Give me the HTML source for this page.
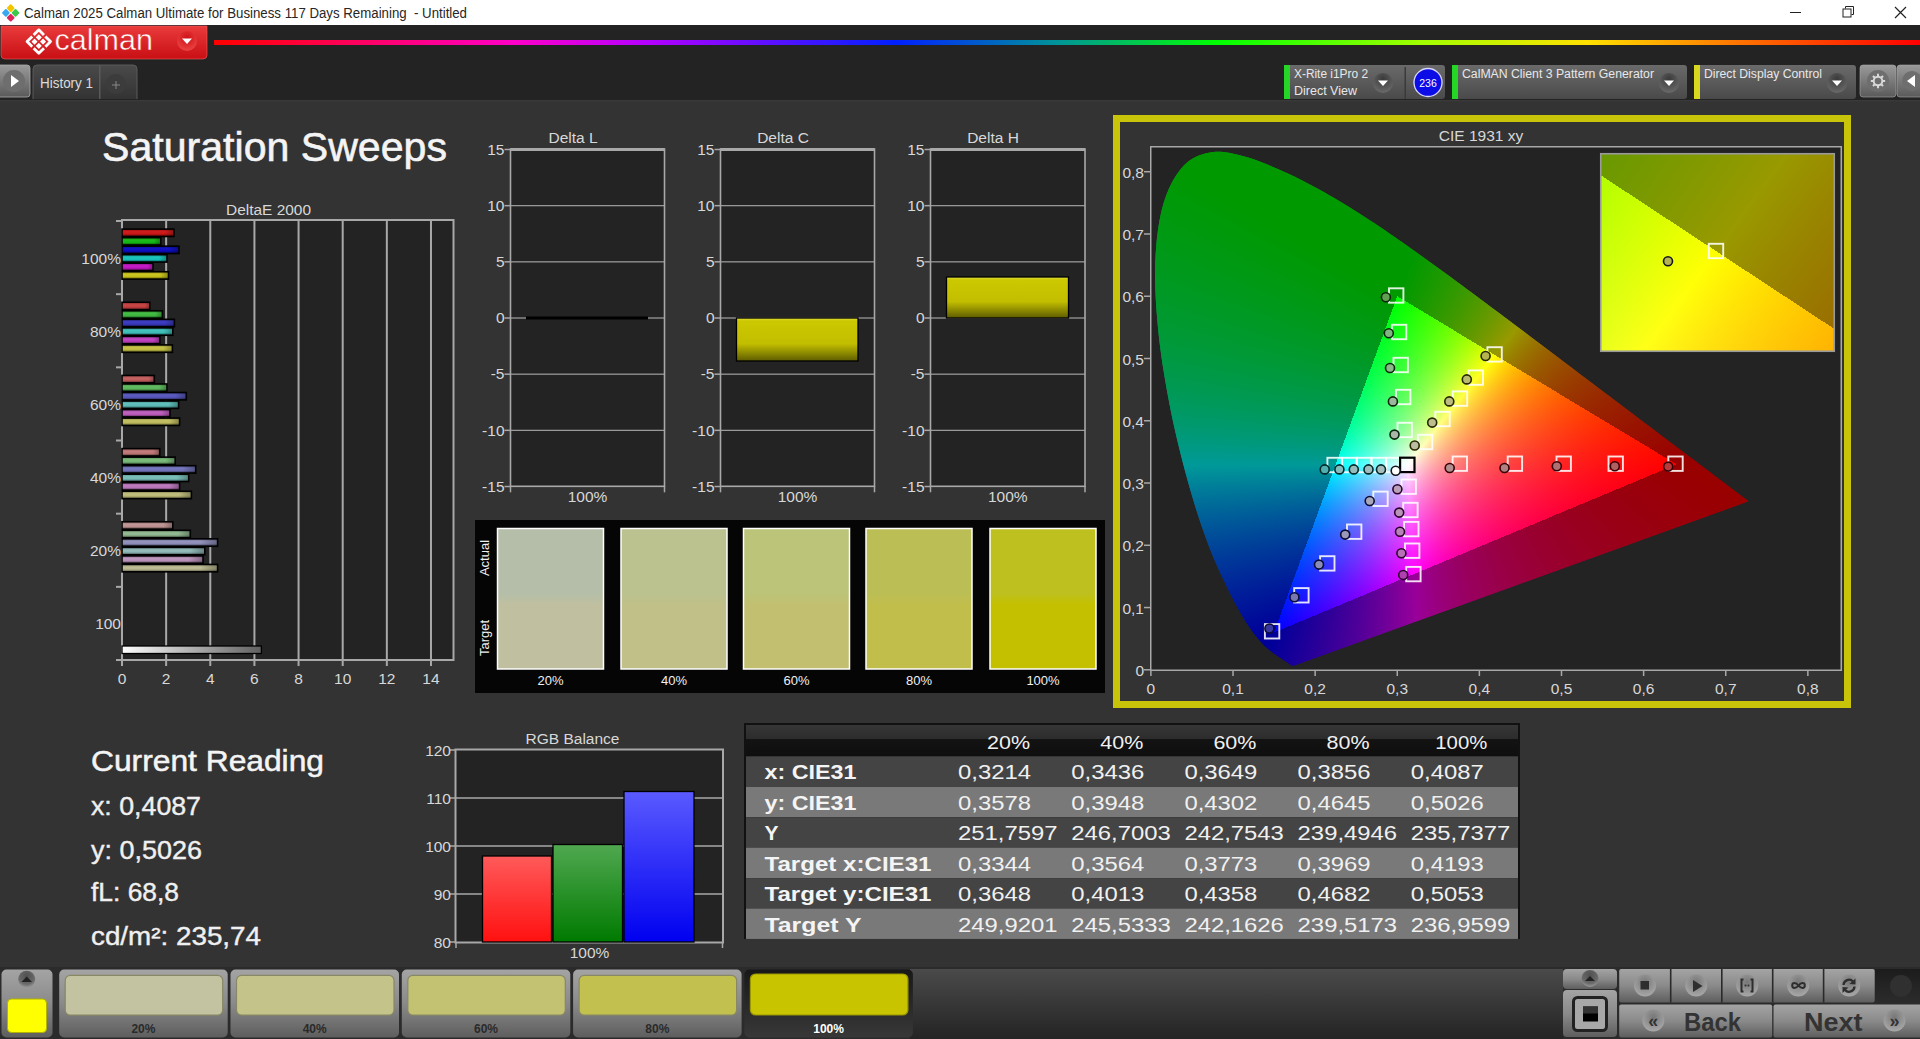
<!DOCTYPE html>
<html><head><meta charset="utf-8"><style>
html,body{margin:0;padding:0;background:#333;overflow:hidden}
#wrap{position:relative;width:1920px;height:1039px;overflow:hidden}
svg{position:absolute;left:0;top:0;font-family:"Liberation Sans", sans-serif}
canvas{position:absolute}
</style></head><body><div id="wrap">
<svg width="1920" height="1039" viewBox="0 0 1920 1039">
<rect x="0" y="0" width="1920" height="1039" fill="#333333"/>
<rect x="0" y="0" width="1920" height="25" fill="#ffffff"/>
<rect x="0" y="25" width="1920" height="75" fill="#232323"/>
<rect x="0" y="100" width="1920" height="1.5" fill="#393939"/>
<g transform="translate(10.7,12.9) rotate(45)"><rect x="-6.4" y="-6.4" width="6" height="6" rx="1" fill="#f5c400"/><rect x="0.4" y="-6.4" width="6" height="6" rx="1" fill="#3cc84b"/><rect x="-6.4" y="0.4" width="6" height="6" rx="1" fill="#3aa8f0"/><rect x="0.4" y="0.4" width="6" height="6" rx="1" fill="#e0245a"/></g>
<text x="24" y="18" font-size="14" fill="#262626" text-anchor="start" font-weight="normal" textLength="443" lengthAdjust="spacingAndGlyphs" >Calman 2025 Calman Ultimate for Business 117 Days Remaining&#160; - Untitled</text>
<rect x="1790" y="12" width="11" height="1" fill="#222"/>
<rect x="1843" y="9" width="8" height="8" fill="none" stroke="#222" stroke-width="1"/>
<path d="M1845.5 8.5 V6.5 H1853.5 V14.5 H1851.5" fill="none" stroke="#222" stroke-width="1"/>
<path d="M1895 7 L1906 18 M1906 7 L1895 18" stroke="#222" stroke-width="1.2"/>
<defs><linearGradient id="gRed" x1="0" y1="0" x2="0" y2="1"><stop offset="0" stop-color="#ea3b3b"/><stop offset="1" stop-color="#c80f14"/></linearGradient><radialGradient id="gRedC" cx="0.5" cy="0.35" r="0.6"><stop offset="0" stop-color="#d01015"/><stop offset="1" stop-color="#e84040"/></radialGradient><linearGradient id="gRain" x1="0" y1="0" x2="1" y2="0"><stop offset="0" stop-color="#ff0000"/><stop offset="0.175" stop-color="#ff00c8"/><stop offset="0.254" stop-color="#b400ff"/><stop offset="0.40" stop-color="#0020ff"/><stop offset="0.496" stop-color="#009696"/><stop offset="0.588" stop-color="#00ff00"/><stop offset="0.706" stop-color="#a0ff00"/><stop offset="0.805" stop-color="#ffe000"/><stop offset="0.89" stop-color="#ff7800"/><stop offset="1" stop-color="#ff0000"/></linearGradient></defs>
<path d="M1 26 H207 V55 Q207 59 203 59 H5 Q1 59 1 55 Z" fill="url(#gRed)" stroke="#f06060" stroke-width="0.6"/>
<g transform="translate(38.8,41.6) rotate(45)"><path d="M-1 -8.3 H-8.3 V-1 M1 -8.3 H8.3 V-1 M8.3 1 V8.3 H1 M-1 8.3 H-8.3 V1" fill="none" stroke="#fff" stroke-width="2.8" stroke-linejoin="round"/><rect x="-5.2" y="-5.2" width="4.4" height="4.4" rx="0.6" fill="#fff"/><rect x="0.8" y="-5.2" width="4.4" height="4.4" rx="0.6" fill="#fff"/><rect x="-5.2" y="0.8" width="4.4" height="4.4" rx="0.6" fill="#fff"/><rect x="0.8" y="0.8" width="4.4" height="4.4" rx="0.6" fill="#fff"/></g>
<text x="54.5" y="50" font-size="30" fill="#ffffff" text-anchor="start" font-weight="normal" textLength="98.5" lengthAdjust="spacingAndGlyphs" stroke="#d82222" stroke-width="0.45">calman</text>
<circle cx="187" cy="41" r="10" fill="url(#gRedC)"/>
<path d="M182 38.5 H192 L187 44 Z" fill="#fff"/>
<rect x="214" y="40" width="1706" height="5" fill="url(#gRain)"/>
<defs><linearGradient id="gBtn" x1="0" y1="0" x2="0" y2="1"><stop offset="0" stop-color="#9a9a9a"/><stop offset="1" stop-color="#5a5a5a"/></linearGradient><linearGradient id="gTab" x1="0" y1="0" x2="0" y2="1"><stop offset="0" stop-color="#4a4a4a"/><stop offset="1" stop-color="#333"/></linearGradient><linearGradient id="gDev" x1="0" y1="0" x2="0" y2="1"><stop offset="0" stop-color="#6a6a6a"/><stop offset="1" stop-color="#4a4a4a"/></linearGradient><radialGradient id="gCirc" cx="0.5" cy="0.3" r="0.7"><stop offset="0" stop-color="#3a3a3a"/><stop offset="1" stop-color="#6a6a6a"/></radialGradient></defs>
<rect x="-3" y="65" width="33" height="32" rx="3" fill="url(#gBtn)" stroke="#aaa" stroke-width="0.8"/>
<circle cx="14" cy="81" r="11" fill="#6e6e6e"/>
<path d="M11 75 L19 81 L11 87 Z" fill="#fff"/>
<path d="M33 99 V69 Q33 65 37 65 H133 Q137 65 137 69 V99" fill="url(#gTab)" stroke="#5a5a5a" stroke-width="1"/>
<rect x="99" y="65" width="1.5" height="34" fill="#5a5a5a"/>
<text x="40" y="88" font-size="14" fill="#dcdcdc" text-anchor="start" font-weight="normal" textLength="53" lengthAdjust="spacingAndGlyphs" >History 1</text>
<circle cx="116" cy="84" r="10" fill="#3c3c3c"/>
<path d="M112 85 H120 M116 81 V89" stroke="#888" stroke-width="1"/>
<rect x="1284" y="65" width="161" height="34" rx="3" fill="url(#gDev)"/>
<rect x="1284" y="65" width="6" height="34" fill="#26d626"/>
<text x="1294" y="78" font-size="12.5" fill="#e8e8e8" text-anchor="start" font-weight="normal" textLength="74" lengthAdjust="spacingAndGlyphs" >X-Rite i1Pro 2</text>
<text x="1294" y="95" font-size="12.5" fill="#e8e8e8" text-anchor="start" font-weight="normal" textLength="63" lengthAdjust="spacingAndGlyphs" >Direct View</text>
<circle cx="1383" cy="83" r="10" fill="url(#gCirc)"/>
<path d="M1378 80.5 H1388 L1383 86 Z" fill="#fff"/>
<rect x="1404.5" y="67" width="1.5" height="32" fill="#3a3a3a"/>
<circle cx="1428" cy="82.5" r="14" fill="#0c0ce6" stroke="#d8d8ff" stroke-width="1.3"/>
<text x="1428" y="86.5" font-size="11.5" fill="#fff" text-anchor="middle" font-weight="normal" textLength="17.5" lengthAdjust="spacingAndGlyphs" >236</text>
<rect x="1452" y="65" width="235" height="34" rx="3" fill="url(#gDev)"/>
<rect x="1452" y="65" width="6" height="34" fill="#26d626"/>
<text x="1462" y="78" font-size="12.5" fill="#e8e8e8" text-anchor="start" font-weight="normal" textLength="192" lengthAdjust="spacingAndGlyphs" >CalMAN Client 3 Pattern Generator</text>
<circle cx="1669" cy="83" r="10" fill="url(#gCirc)"/>
<path d="M1664 80.5 H1674 L1669 86 Z" fill="#fff"/>
<rect x="1694" y="65" width="162" height="34" rx="3" fill="url(#gDev)"/>
<rect x="1694" y="65" width="6" height="34" fill="#d8d820"/>
<text x="1704" y="78" font-size="12.5" fill="#e8e8e8" text-anchor="start" font-weight="normal" textLength="118" lengthAdjust="spacingAndGlyphs" >Direct Display Control</text>
<circle cx="1837" cy="83" r="10" fill="url(#gCirc)"/>
<path d="M1832 80.5 H1842 L1837 86 Z" fill="#fff"/>
<rect x="1860" y="65" width="36" height="32" rx="3" fill="url(#gBtn)" stroke="#aaa" stroke-width="0.6"/>
<circle cx="1878" cy="81" r="11" fill="#6e6e6e"/>
<g transform="translate(1878,81)"><path d="M4.49 -1.00 L7.13 -1.00 L7.13 1.00 L4.49 1.00 L3.88 2.46 L5.75 4.33 L4.33 5.75 L2.46 3.88 L1.00 4.49 L1.00 7.13 L-1.00 7.13 L-1.00 4.49 L-2.46 3.88 L-4.33 5.75 L-5.75 4.33 L-3.88 2.46 L-4.49 1.00 L-7.13 1.00 L-7.13 -1.00 L-4.49 -1.00 L-3.88 -2.46 L-5.75 -4.33 L-4.33 -5.75 L-2.46 -3.88 L-1.00 -4.49 L-1.00 -7.13 L1.00 -7.13 L1.00 -4.49 L2.46 -3.88 L4.33 -5.75 L5.75 -4.33 L3.88 -2.46 Z" fill="#d8d8d8"/><circle r="5.3" fill="#d8d8d8"/><circle r="3.3" fill="#6e6e6e"/></g>
<rect x="1897" y="65" width="26" height="32" rx="3" fill="url(#gBtn)" stroke="#aaa" stroke-width="0.6"/>
<circle cx="1912" cy="81" r="10" fill="#6e6e6e"/>
<path d="M1915 75 L1907 81 L1915 87 Z" fill="#fff"/>
<text x="102" y="161" font-size="40" fill="#f4f4f4" text-anchor="start" font-weight="normal" textLength="345" lengthAdjust="spacingAndGlyphs" stroke="#f4f4f4" stroke-width="0.6">Saturation Sweeps</text>
<rect x="122" y="221" width="331.5" height="439" fill="#232323"/>
<rect x="165.14" y="221" width="2" height="439" fill="#a8a8a8"/>
<rect x="209.28" y="221" width="2" height="439" fill="#a8a8a8"/>
<rect x="253.42" y="221" width="2" height="439" fill="#a8a8a8"/>
<rect x="297.56" y="221" width="2" height="439" fill="#a8a8a8"/>
<rect x="341.70" y="221" width="2" height="439" fill="#a8a8a8"/>
<rect x="385.84" y="221" width="2" height="439" fill="#a8a8a8"/>
<rect x="429.98" y="221" width="2" height="439" fill="#a8a8a8"/>
<rect x="122" y="220" width="331.5" height="440" fill="none" stroke="#a8a8a8" stroke-width="2"/>
<text x="268.5" y="215" font-size="15.5" fill="#d8d8d8" text-anchor="middle" font-weight="normal" textLength="85" lengthAdjust="spacingAndGlyphs" >DeltaE 2000</text>
<rect x="116" y="220.0" width="6" height="2" fill="#a8a8a8"/>
<rect x="116" y="293.17" width="6" height="2" fill="#a8a8a8"/>
<rect x="116" y="366.34000000000003" width="6" height="2" fill="#a8a8a8"/>
<rect x="116" y="439.51" width="6" height="2" fill="#a8a8a8"/>
<rect x="116" y="512.6800000000001" width="6" height="2" fill="#a8a8a8"/>
<rect x="116" y="585.85" width="6" height="2" fill="#a8a8a8"/>
<rect x="116" y="659.02" width="6" height="2" fill="#a8a8a8"/>
<rect x="121.00" y="660" width="2" height="6" fill="#a8a8a8"/>
<text x="122.0" y="684" font-size="15.5" fill="#d8d8d8" text-anchor="middle" font-weight="normal" >0</text>
<rect x="165.14" y="660" width="2" height="6" fill="#a8a8a8"/>
<text x="166.14" y="684" font-size="15.5" fill="#d8d8d8" text-anchor="middle" font-weight="normal" >2</text>
<rect x="209.28" y="660" width="2" height="6" fill="#a8a8a8"/>
<text x="210.28" y="684" font-size="15.5" fill="#d8d8d8" text-anchor="middle" font-weight="normal" >4</text>
<rect x="253.42" y="660" width="2" height="6" fill="#a8a8a8"/>
<text x="254.42000000000002" y="684" font-size="15.5" fill="#d8d8d8" text-anchor="middle" font-weight="normal" >6</text>
<rect x="297.56" y="660" width="2" height="6" fill="#a8a8a8"/>
<text x="298.56" y="684" font-size="15.5" fill="#d8d8d8" text-anchor="middle" font-weight="normal" >8</text>
<rect x="341.70" y="660" width="2" height="6" fill="#a8a8a8"/>
<text x="342.7" y="684" font-size="15.5" fill="#d8d8d8" text-anchor="middle" font-weight="normal" >10</text>
<rect x="385.84" y="660" width="2" height="6" fill="#a8a8a8"/>
<text x="386.84000000000003" y="684" font-size="15.5" fill="#d8d8d8" text-anchor="middle" font-weight="normal" >12</text>
<rect x="429.98" y="660" width="2" height="6" fill="#a8a8a8"/>
<text x="430.98" y="684" font-size="15.5" fill="#d8d8d8" text-anchor="middle" font-weight="normal" >14</text>
<text x="121" y="263.6" font-size="15.5" fill="#d8d8d8" text-anchor="end" font-weight="normal" >100%</text>
<text x="121" y="336.77000000000004" font-size="15.5" fill="#d8d8d8" text-anchor="end" font-weight="normal" >80%</text>
<text x="121" y="409.94000000000005" font-size="15.5" fill="#d8d8d8" text-anchor="end" font-weight="normal" >60%</text>
<text x="121" y="483.11" font-size="15.5" fill="#d8d8d8" text-anchor="end" font-weight="normal" >40%</text>
<text x="121" y="556.2800000000001" font-size="15.5" fill="#d8d8d8" text-anchor="end" font-weight="normal" >20%</text>
<text x="121" y="629.45" font-size="15.5" fill="#d8d8d8" text-anchor="end" font-weight="normal" >100</text>
<rect x="122" y="229.10" width="52.0" height="7.4" fill="url(#gb0)" stroke="#000" stroke-width="1.6"/>
<rect x="122" y="229.10" width="52.0" height="7.4" fill="url(#gShade)"/>
<rect x="122" y="237.63" width="38.8" height="7.4" fill="url(#gb1)" stroke="#000" stroke-width="1.6"/>
<rect x="122" y="237.63" width="38.8" height="7.4" fill="url(#gShade)"/>
<rect x="122" y="246.16" width="57.0" height="7.4" fill="url(#gb2)" stroke="#000" stroke-width="1.6"/>
<rect x="122" y="246.16" width="57.0" height="7.4" fill="url(#gShade)"/>
<rect x="122" y="254.69" width="45.0" height="7.4" fill="url(#gb3)" stroke="#000" stroke-width="1.6"/>
<rect x="122" y="254.69" width="45.0" height="7.4" fill="url(#gShade)"/>
<rect x="122" y="263.22" width="31.0" height="7.4" fill="url(#gb4)" stroke="#000" stroke-width="1.6"/>
<rect x="122" y="263.22" width="31.0" height="7.4" fill="url(#gShade)"/>
<rect x="122" y="271.75" width="46.5" height="7.4" fill="url(#gb5)" stroke="#000" stroke-width="1.6"/>
<rect x="122" y="271.75" width="46.5" height="7.4" fill="url(#gShade)"/>
<rect x="122" y="302.27" width="27.8" height="7.4" fill="url(#gb6)" stroke="#000" stroke-width="1.6"/>
<rect x="122" y="302.27" width="27.8" height="7.4" fill="url(#gShade)"/>
<rect x="122" y="310.80" width="40.4" height="7.4" fill="url(#gb7)" stroke="#000" stroke-width="1.6"/>
<rect x="122" y="310.80" width="40.4" height="7.4" fill="url(#gShade)"/>
<rect x="122" y="319.33" width="52.4" height="7.4" fill="url(#gb8)" stroke="#000" stroke-width="1.6"/>
<rect x="122" y="319.33" width="52.4" height="7.4" fill="url(#gShade)"/>
<rect x="122" y="327.86" width="50.8" height="7.4" fill="url(#gb9)" stroke="#000" stroke-width="1.6"/>
<rect x="122" y="327.86" width="50.8" height="7.4" fill="url(#gShade)"/>
<rect x="122" y="336.39" width="37.8" height="7.4" fill="url(#gb10)" stroke="#000" stroke-width="1.6"/>
<rect x="122" y="336.39" width="37.8" height="7.4" fill="url(#gShade)"/>
<rect x="122" y="344.92" width="50.4" height="7.4" fill="url(#gb11)" stroke="#000" stroke-width="1.6"/>
<rect x="122" y="344.92" width="50.4" height="7.4" fill="url(#gShade)"/>
<rect x="122" y="375.44" width="32.3" height="7.4" fill="url(#gb12)" stroke="#000" stroke-width="1.6"/>
<rect x="122" y="375.44" width="32.3" height="7.4" fill="url(#gShade)"/>
<rect x="122" y="383.97" width="45.0" height="7.4" fill="url(#gb13)" stroke="#000" stroke-width="1.6"/>
<rect x="122" y="383.97" width="45.0" height="7.4" fill="url(#gShade)"/>
<rect x="122" y="392.50" width="64.3" height="7.4" fill="url(#gb14)" stroke="#000" stroke-width="1.6"/>
<rect x="122" y="392.50" width="64.3" height="7.4" fill="url(#gShade)"/>
<rect x="122" y="401.03" width="56.6" height="7.4" fill="url(#gb15)" stroke="#000" stroke-width="1.6"/>
<rect x="122" y="401.03" width="56.6" height="7.4" fill="url(#gShade)"/>
<rect x="122" y="409.56" width="48.0" height="7.4" fill="url(#gb16)" stroke="#000" stroke-width="1.6"/>
<rect x="122" y="409.56" width="48.0" height="7.4" fill="url(#gShade)"/>
<rect x="122" y="418.09" width="57.6" height="7.4" fill="url(#gb17)" stroke="#000" stroke-width="1.6"/>
<rect x="122" y="418.09" width="57.6" height="7.4" fill="url(#gShade)"/>
<rect x="122" y="448.61" width="37.7" height="7.4" fill="url(#gb18)" stroke="#000" stroke-width="1.6"/>
<rect x="122" y="448.61" width="37.7" height="7.4" fill="url(#gShade)"/>
<rect x="122" y="457.14" width="53.2" height="7.4" fill="url(#gb19)" stroke="#000" stroke-width="1.6"/>
<rect x="122" y="457.14" width="53.2" height="7.4" fill="url(#gShade)"/>
<rect x="122" y="465.67" width="73.7" height="7.4" fill="url(#gb20)" stroke="#000" stroke-width="1.6"/>
<rect x="122" y="465.67" width="73.7" height="7.4" fill="url(#gShade)"/>
<rect x="122" y="474.20" width="66.7" height="7.4" fill="url(#gb21)" stroke="#000" stroke-width="1.6"/>
<rect x="122" y="474.20" width="66.7" height="7.4" fill="url(#gShade)"/>
<rect x="122" y="482.73" width="57.6" height="7.4" fill="url(#gb22)" stroke="#000" stroke-width="1.6"/>
<rect x="122" y="482.73" width="57.6" height="7.4" fill="url(#gShade)"/>
<rect x="122" y="491.26" width="69.4" height="7.4" fill="url(#gb23)" stroke="#000" stroke-width="1.6"/>
<rect x="122" y="491.26" width="69.4" height="7.4" fill="url(#gShade)"/>
<rect x="122" y="521.78" width="50.8" height="7.4" fill="url(#gb24)" stroke="#000" stroke-width="1.6"/>
<rect x="122" y="521.78" width="50.8" height="7.4" fill="url(#gShade)"/>
<rect x="122" y="530.31" width="68.3" height="7.4" fill="url(#gb25)" stroke="#000" stroke-width="1.6"/>
<rect x="122" y="530.31" width="68.3" height="7.4" fill="url(#gShade)"/>
<rect x="122" y="538.84" width="95.6" height="7.4" fill="url(#gb26)" stroke="#000" stroke-width="1.6"/>
<rect x="122" y="538.84" width="95.6" height="7.4" fill="url(#gShade)"/>
<rect x="122" y="547.37" width="82.8" height="7.4" fill="url(#gb27)" stroke="#000" stroke-width="1.6"/>
<rect x="122" y="547.37" width="82.8" height="7.4" fill="url(#gShade)"/>
<rect x="122" y="555.90" width="81.0" height="7.4" fill="url(#gb28)" stroke="#000" stroke-width="1.6"/>
<rect x="122" y="555.90" width="81.0" height="7.4" fill="url(#gShade)"/>
<rect x="122" y="564.43" width="95.6" height="7.4" fill="url(#gb29)" stroke="#000" stroke-width="1.6"/>
<rect x="122" y="564.43" width="95.6" height="7.4" fill="url(#gShade)"/>
<rect x="122" y="646" width="139.39999999999998" height="7.5" fill="url(#gGray)" stroke="#000" stroke-width="1.3"/>
<defs><linearGradient id="gb0" x1="0" y1="0" x2="0" y2="1"><stop offset="0" stop-color="rgb(160, 17, 17)"/><stop offset="0.35" stop-color="rgb(208, 30, 30)"/><stop offset="0.65" stop-color="rgb(200, 22, 22)"/><stop offset="1" stop-color="rgb(90, 9, 9)"/></linearGradient><linearGradient id="gb1" x1="0" y1="0" x2="0" y2="1"><stop offset="0" stop-color="rgb(16, 144, 16)"/><stop offset="0.35" stop-color="rgb(28, 188, 28)"/><stop offset="0.65" stop-color="rgb(20, 180, 20)"/><stop offset="1" stop-color="rgb(9, 81, 9)"/></linearGradient><linearGradient id="gb2" x1="0" y1="0" x2="0" y2="1"><stop offset="0" stop-color="rgb(9, 9, 152)"/><stop offset="0.35" stop-color="rgb(20, 20, 198)"/><stop offset="0.65" stop-color="rgb(12, 12, 190)"/><stop offset="1" stop-color="rgb(5, 5, 85)"/></linearGradient><linearGradient id="gb3" x1="0" y1="0" x2="0" y2="1"><stop offset="0" stop-color="rgb(16, 152, 145)"/><stop offset="0.35" stop-color="rgb(28, 198, 190)"/><stop offset="0.65" stop-color="rgb(20, 190, 182)"/><stop offset="1" stop-color="rgb(9, 85, 81)"/></linearGradient><linearGradient id="gb4" x1="0" y1="0" x2="0" y2="1"><stop offset="0" stop-color="rgb(152, 17, 152)"/><stop offset="0.35" stop-color="rgb(198, 30, 198)"/><stop offset="0.65" stop-color="rgb(190, 22, 190)"/><stop offset="1" stop-color="rgb(85, 9, 85)"/></linearGradient><linearGradient id="gb5" x1="0" y1="0" x2="0" y2="1"><stop offset="0" stop-color="rgb(156, 152, 20)"/><stop offset="0.35" stop-color="rgb(203, 198, 33)"/><stop offset="0.65" stop-color="rgb(195, 190, 25)"/><stop offset="1" stop-color="rgb(87, 85, 11)"/></linearGradient><linearGradient id="gb6" x1="0" y1="0" x2="0" y2="1"><stop offset="0" stop-color="rgb(155, 50, 50)"/><stop offset="0.35" stop-color="rgb(202, 71, 71)"/><stop offset="0.65" stop-color="rgb(194, 63, 63)"/><stop offset="1" stop-color="rgb(87, 28, 28)"/></linearGradient><linearGradient id="gb7" x1="0" y1="0" x2="0" y2="1"><stop offset="0" stop-color="rgb(48, 144, 48)"/><stop offset="0.35" stop-color="rgb(69, 188, 69)"/><stop offset="0.65" stop-color="rgb(61, 180, 61)"/><stop offset="1" stop-color="rgb(27, 81, 27)"/></linearGradient><linearGradient id="gb8" x1="0" y1="0" x2="0" y2="1"><stop offset="0" stop-color="rgb(44, 44, 149)"/><stop offset="0.35" stop-color="rgb(63, 63, 195)"/><stop offset="0.65" stop-color="rgb(55, 55, 187)"/><stop offset="1" stop-color="rgb(24, 24, 84)"/></linearGradient><linearGradient id="gb9" x1="0" y1="0" x2="0" y2="1"><stop offset="0" stop-color="rgb(48, 149, 144)"/><stop offset="0.35" stop-color="rgb(69, 195, 189)"/><stop offset="0.65" stop-color="rgb(61, 187, 181)"/><stop offset="1" stop-color="rgb(27, 84, 81)"/></linearGradient><linearGradient id="gb10" x1="0" y1="0" x2="0" y2="1"><stop offset="0" stop-color="rgb(149, 50, 149)"/><stop offset="0.35" stop-color="rgb(195, 71, 195)"/><stop offset="0.65" stop-color="rgb(187, 63, 187)"/><stop offset="1" stop-color="rgb(84, 28, 84)"/></linearGradient><linearGradient id="gb11" x1="0" y1="0" x2="0" y2="1"><stop offset="0" stop-color="rgb(152, 149, 52)"/><stop offset="0.35" stop-color="rgb(199, 195, 73)"/><stop offset="0.65" stop-color="rgb(191, 187, 65)"/><stop offset="1" stop-color="rgb(85, 84, 29)"/></linearGradient><linearGradient id="gb12" x1="0" y1="0" x2="0" y2="1"><stop offset="0" stop-color="rgb(152, 72, 72)"/><stop offset="0.35" stop-color="rgb(199, 99, 99)"/><stop offset="0.65" stop-color="rgb(191, 91, 91)"/><stop offset="1" stop-color="rgb(85, 40, 40)"/></linearGradient><linearGradient id="gb13" x1="0" y1="0" x2="0" y2="1"><stop offset="0" stop-color="rgb(72, 144, 72)"/><stop offset="0.35" stop-color="rgb(98, 188, 98)"/><stop offset="0.65" stop-color="rgb(90, 180, 90)"/><stop offset="1" stop-color="rgb(40, 81, 40)"/></linearGradient><linearGradient id="gb14" x1="0" y1="0" x2="0" y2="1"><stop offset="0" stop-color="rgb(68, 68, 148)"/><stop offset="0.35" stop-color="rgb(93, 93, 193)"/><stop offset="0.65" stop-color="rgb(85, 85, 185)"/><stop offset="1" stop-color="rgb(38, 38, 83)"/></linearGradient><linearGradient id="gb15" x1="0" y1="0" x2="0" y2="1"><stop offset="0" stop-color="rgb(72, 148, 144)"/><stop offset="0.35" stop-color="rgb(98, 193, 189)"/><stop offset="0.65" stop-color="rgb(90, 185, 181)"/><stop offset="1" stop-color="rgb(40, 83, 81)"/></linearGradient><linearGradient id="gb16" x1="0" y1="0" x2="0" y2="1"><stop offset="0" stop-color="rgb(148, 72, 148)"/><stop offset="0.35" stop-color="rgb(193, 99, 193)"/><stop offset="0.65" stop-color="rgb(185, 91, 185)"/><stop offset="1" stop-color="rgb(83, 40, 83)"/></linearGradient><linearGradient id="gb17" x1="0" y1="0" x2="0" y2="1"><stop offset="0" stop-color="rgb(150, 148, 74)"/><stop offset="0.35" stop-color="rgb(196, 193, 101)"/><stop offset="0.65" stop-color="rgb(188, 185, 93)"/><stop offset="1" stop-color="rgb(84, 83, 41)"/></linearGradient><linearGradient id="gb18" x1="0" y1="0" x2="0" y2="1"><stop offset="0" stop-color="rgb(150, 92, 92)"/><stop offset="0.35" stop-color="rgb(196, 124, 124)"/><stop offset="0.65" stop-color="rgb(188, 116, 116)"/><stop offset="1" stop-color="rgb(84, 52, 52)"/></linearGradient><linearGradient id="gb19" x1="0" y1="0" x2="0" y2="1"><stop offset="0" stop-color="rgb(92, 144, 92)"/><stop offset="0.35" stop-color="rgb(124, 188, 124)"/><stop offset="0.65" stop-color="rgb(116, 180, 116)"/><stop offset="1" stop-color="rgb(52, 81, 52)"/></linearGradient><linearGradient id="gb20" x1="0" y1="0" x2="0" y2="1"><stop offset="0" stop-color="rgb(89, 89, 147)"/><stop offset="0.35" stop-color="rgb(120, 120, 192)"/><stop offset="0.65" stop-color="rgb(112, 112, 184)"/><stop offset="1" stop-color="rgb(50, 50, 82)"/></linearGradient><linearGradient id="gb21" x1="0" y1="0" x2="0" y2="1"><stop offset="0" stop-color="rgb(92, 147, 144)"/><stop offset="0.35" stop-color="rgb(124, 192, 188)"/><stop offset="0.65" stop-color="rgb(116, 184, 180)"/><stop offset="1" stop-color="rgb(52, 82, 81)"/></linearGradient><linearGradient id="gb22" x1="0" y1="0" x2="0" y2="1"><stop offset="0" stop-color="rgb(147, 92, 147)"/><stop offset="0.35" stop-color="rgb(192, 124, 192)"/><stop offset="0.65" stop-color="rgb(184, 116, 184)"/><stop offset="1" stop-color="rgb(82, 52, 82)"/></linearGradient><linearGradient id="gb23" x1="0" y1="0" x2="0" y2="1"><stop offset="0" stop-color="rgb(148, 147, 94)"/><stop offset="0.35" stop-color="rgb(194, 192, 126)"/><stop offset="0.65" stop-color="rgb(186, 184, 118)"/><stop offset="1" stop-color="rgb(83, 82, 53)"/></linearGradient><linearGradient id="gb24" x1="0" y1="0" x2="0" y2="1"><stop offset="0" stop-color="rgb(147, 113, 113)"/><stop offset="0.35" stop-color="rgb(192, 150, 150)"/><stop offset="0.65" stop-color="rgb(184, 142, 142)"/><stop offset="1" stop-color="rgb(82, 63, 63)"/></linearGradient><linearGradient id="gb25" x1="0" y1="0" x2="0" y2="1"><stop offset="0" stop-color="rgb(112, 144, 112)"/><stop offset="0.35" stop-color="rgb(149, 188, 149)"/><stop offset="0.65" stop-color="rgb(141, 180, 141)"/><stop offset="1" stop-color="rgb(63, 81, 63)"/></linearGradient><linearGradient id="gb26" x1="0" y1="0" x2="0" y2="1"><stop offset="0" stop-color="rgb(111, 111, 145)"/><stop offset="0.35" stop-color="rgb(147, 147, 190)"/><stop offset="0.65" stop-color="rgb(139, 139, 182)"/><stop offset="1" stop-color="rgb(62, 62, 81)"/></linearGradient><linearGradient id="gb27" x1="0" y1="0" x2="0" y2="1"><stop offset="0" stop-color="rgb(112, 145, 144)"/><stop offset="0.35" stop-color="rgb(149, 190, 188)"/><stop offset="0.65" stop-color="rgb(141, 182, 180)"/><stop offset="1" stop-color="rgb(63, 81, 81)"/></linearGradient><linearGradient id="gb28" x1="0" y1="0" x2="0" y2="1"><stop offset="0" stop-color="rgb(145, 113, 145)"/><stop offset="0.35" stop-color="rgb(190, 150, 190)"/><stop offset="0.65" stop-color="rgb(182, 142, 182)"/><stop offset="1" stop-color="rgb(81, 63, 81)"/></linearGradient><linearGradient id="gb29" x1="0" y1="0" x2="0" y2="1"><stop offset="0" stop-color="rgb(146, 145, 113)"/><stop offset="0.35" stop-color="rgb(191, 190, 150)"/><stop offset="0.65" stop-color="rgb(183, 182, 142)"/><stop offset="1" stop-color="rgb(82, 81, 63)"/></linearGradient><linearGradient id="gShade" x1="0" y1="0" x2="1" y2="0"><stop offset="0.82" stop-color="#000" stop-opacity="0"/><stop offset="1" stop-color="#000" stop-opacity="0.3"/></linearGradient><linearGradient id="gGray" x1="0" y1="0" x2="1" y2="0"><stop offset="0" stop-color="#ffffff"/><stop offset="1" stop-color="#606060"/></linearGradient></defs>
<defs><linearGradient id="gYel" x1="0" y1="0" x2="0" y2="1"><stop offset="0" stop-color="#e4e040"/><stop offset="0.07" stop-color="#ccc800"/><stop offset="0.6" stop-color="#c2be00"/><stop offset="1" stop-color="#5e5c00"/></linearGradient></defs>
<rect x="510.5" y="149.5" width="154.0" height="336.8" fill="#232323"/>
<rect x="510.5" y="205.07" width="154.0" height="1.2" fill="#a0a0a0"/>
<rect x="510.5" y="261.24" width="154.0" height="1.2" fill="#a0a0a0"/>
<rect x="510.5" y="317.41" width="154.0" height="1.2" fill="#a0a0a0"/>
<rect x="510.5" y="373.58" width="154.0" height="1.2" fill="#a0a0a0"/>
<rect x="510.5" y="429.75" width="154.0" height="1.2" fill="#a0a0a0"/>
<rect x="510.5" y="149.0" width="154.0" height="337.3" fill="none" stroke="#a8a8a8" stroke-width="1.6"/>
<rect x="510.5" y="148.0" width="154.0" height="3" fill="#a8a8a8"/>
<rect x="504.5" y="148.75" width="6" height="1.5" fill="#a8a8a8"/>
<text x="504.5" y="154.7" font-size="15.5" fill="#d8d8d8" text-anchor="end" font-weight="normal" >15</text>
<rect x="504.5" y="204.92" width="6" height="1.5" fill="#a8a8a8"/>
<text x="504.5" y="210.87" font-size="15.5" fill="#d8d8d8" text-anchor="end" font-weight="normal" >10</text>
<rect x="504.5" y="261.09" width="6" height="1.5" fill="#a8a8a8"/>
<text x="504.5" y="267.04" font-size="15.5" fill="#d8d8d8" text-anchor="end" font-weight="normal" >5</text>
<rect x="504.5" y="317.26" width="6" height="1.5" fill="#a8a8a8"/>
<text x="504.5" y="323.21" font-size="15.5" fill="#d8d8d8" text-anchor="end" font-weight="normal" >0</text>
<rect x="504.5" y="373.43" width="6" height="1.5" fill="#a8a8a8"/>
<text x="504.5" y="379.38" font-size="15.5" fill="#d8d8d8" text-anchor="end" font-weight="normal" >-5</text>
<rect x="504.5" y="429.60" width="6" height="1.5" fill="#a8a8a8"/>
<text x="504.5" y="435.55" font-size="15.5" fill="#d8d8d8" text-anchor="end" font-weight="normal" >-10</text>
<rect x="504.5" y="485.77" width="6" height="1.5" fill="#a8a8a8"/>
<text x="504.5" y="491.71999999999997" font-size="15.5" fill="#d8d8d8" text-anchor="end" font-weight="normal" >-15</text>
<rect x="509.75" y="486.3" width="1.5" height="6" fill="#a8a8a8"/>
<rect x="663.75" y="486.3" width="1.5" height="6" fill="#a8a8a8"/>
<text x="573" y="143" font-size="15.5" fill="#d8d8d8" text-anchor="middle" font-weight="normal" >Delta L</text>
<text x="587.5" y="502" font-size="15.5" fill="#d8d8d8" text-anchor="middle" font-weight="normal" >100%</text>
<rect x="720.5" y="149.5" width="154.0" height="336.8" fill="#232323"/>
<rect x="720.5" y="205.07" width="154.0" height="1.2" fill="#a0a0a0"/>
<rect x="720.5" y="261.24" width="154.0" height="1.2" fill="#a0a0a0"/>
<rect x="720.5" y="317.41" width="154.0" height="1.2" fill="#a0a0a0"/>
<rect x="720.5" y="373.58" width="154.0" height="1.2" fill="#a0a0a0"/>
<rect x="720.5" y="429.75" width="154.0" height="1.2" fill="#a0a0a0"/>
<rect x="720.5" y="149.0" width="154.0" height="337.3" fill="none" stroke="#a8a8a8" stroke-width="1.6"/>
<rect x="720.5" y="148.0" width="154.0" height="3" fill="#a8a8a8"/>
<rect x="714.5" y="148.75" width="6" height="1.5" fill="#a8a8a8"/>
<text x="714.5" y="154.7" font-size="15.5" fill="#d8d8d8" text-anchor="end" font-weight="normal" >15</text>
<rect x="714.5" y="204.92" width="6" height="1.5" fill="#a8a8a8"/>
<text x="714.5" y="210.87" font-size="15.5" fill="#d8d8d8" text-anchor="end" font-weight="normal" >10</text>
<rect x="714.5" y="261.09" width="6" height="1.5" fill="#a8a8a8"/>
<text x="714.5" y="267.04" font-size="15.5" fill="#d8d8d8" text-anchor="end" font-weight="normal" >5</text>
<rect x="714.5" y="317.26" width="6" height="1.5" fill="#a8a8a8"/>
<text x="714.5" y="323.21" font-size="15.5" fill="#d8d8d8" text-anchor="end" font-weight="normal" >0</text>
<rect x="714.5" y="373.43" width="6" height="1.5" fill="#a8a8a8"/>
<text x="714.5" y="379.38" font-size="15.5" fill="#d8d8d8" text-anchor="end" font-weight="normal" >-5</text>
<rect x="714.5" y="429.60" width="6" height="1.5" fill="#a8a8a8"/>
<text x="714.5" y="435.55" font-size="15.5" fill="#d8d8d8" text-anchor="end" font-weight="normal" >-10</text>
<rect x="714.5" y="485.77" width="6" height="1.5" fill="#a8a8a8"/>
<text x="714.5" y="491.71999999999997" font-size="15.5" fill="#d8d8d8" text-anchor="end" font-weight="normal" >-15</text>
<rect x="719.75" y="486.3" width="1.5" height="6" fill="#a8a8a8"/>
<rect x="873.75" y="486.3" width="1.5" height="6" fill="#a8a8a8"/>
<text x="783" y="143" font-size="15.5" fill="#d8d8d8" text-anchor="middle" font-weight="normal" >Delta C</text>
<text x="797.5" y="502" font-size="15.5" fill="#d8d8d8" text-anchor="middle" font-weight="normal" >100%</text>
<rect x="930.5" y="149.5" width="154.5" height="336.8" fill="#232323"/>
<rect x="930.5" y="205.07" width="154.5" height="1.2" fill="#a0a0a0"/>
<rect x="930.5" y="261.24" width="154.5" height="1.2" fill="#a0a0a0"/>
<rect x="930.5" y="317.41" width="154.5" height="1.2" fill="#a0a0a0"/>
<rect x="930.5" y="373.58" width="154.5" height="1.2" fill="#a0a0a0"/>
<rect x="930.5" y="429.75" width="154.5" height="1.2" fill="#a0a0a0"/>
<rect x="930.5" y="149.0" width="154.5" height="337.3" fill="none" stroke="#a8a8a8" stroke-width="1.6"/>
<rect x="930.5" y="148.0" width="154.5" height="3" fill="#a8a8a8"/>
<rect x="924.5" y="148.75" width="6" height="1.5" fill="#a8a8a8"/>
<text x="924.5" y="154.7" font-size="15.5" fill="#d8d8d8" text-anchor="end" font-weight="normal" >15</text>
<rect x="924.5" y="204.92" width="6" height="1.5" fill="#a8a8a8"/>
<text x="924.5" y="210.87" font-size="15.5" fill="#d8d8d8" text-anchor="end" font-weight="normal" >10</text>
<rect x="924.5" y="261.09" width="6" height="1.5" fill="#a8a8a8"/>
<text x="924.5" y="267.04" font-size="15.5" fill="#d8d8d8" text-anchor="end" font-weight="normal" >5</text>
<rect x="924.5" y="317.26" width="6" height="1.5" fill="#a8a8a8"/>
<text x="924.5" y="323.21" font-size="15.5" fill="#d8d8d8" text-anchor="end" font-weight="normal" >0</text>
<rect x="924.5" y="373.43" width="6" height="1.5" fill="#a8a8a8"/>
<text x="924.5" y="379.38" font-size="15.5" fill="#d8d8d8" text-anchor="end" font-weight="normal" >-5</text>
<rect x="924.5" y="429.60" width="6" height="1.5" fill="#a8a8a8"/>
<text x="924.5" y="435.55" font-size="15.5" fill="#d8d8d8" text-anchor="end" font-weight="normal" >-10</text>
<rect x="924.5" y="485.77" width="6" height="1.5" fill="#a8a8a8"/>
<text x="924.5" y="491.71999999999997" font-size="15.5" fill="#d8d8d8" text-anchor="end" font-weight="normal" >-15</text>
<rect x="929.75" y="486.3" width="1.5" height="6" fill="#a8a8a8"/>
<rect x="1084.25" y="486.3" width="1.5" height="6" fill="#a8a8a8"/>
<text x="993" y="143" font-size="15.5" fill="#d8d8d8" text-anchor="middle" font-weight="normal" >Delta H</text>
<text x="1007.75" y="502" font-size="15.5" fill="#d8d8d8" text-anchor="middle" font-weight="normal" >100%</text>
<rect x="526" y="316.5" width="122" height="3" fill="#000"/>
<rect x="736.5" y="318" width="121.5" height="43" fill="url(#gYel)" stroke="#000" stroke-width="1.3"/>
<defs><linearGradient id="gYel2" x1="0" y1="0" x2="0" y2="1"><stop offset="0" stop-color="#e4e040"/><stop offset="0.07" stop-color="#ccc800"/><stop offset="0.6" stop-color="#c2be00"/><stop offset="1" stop-color="#5e5c00"/></linearGradient></defs>
<rect x="946.5" y="277" width="122" height="41" fill="url(#gYel2)" stroke="#000" stroke-width="1.3"/>
<rect x="475" y="520" width="630" height="173" fill="#050505"/>
<defs><linearGradient id="gsw0" x1="0" y1="0" x2="0" y2="1"><stop offset="0.46" stop-color="#b4bea8"/><stop offset="0.54" stop-color="#c0c0a0"/></linearGradient></defs>
<rect x="497.5" y="528.5" width="106" height="140.5" fill="url(#gsw0)"/>
<rect x="497.5" y="528.5" width="106" height="140.5" fill="none" stroke="#fff" stroke-width="1.5"/>
<text x="550.5" y="685" font-size="13" fill="#f0f0f0" text-anchor="middle" font-weight="normal" >20%</text>
<defs><linearGradient id="gsw1" x1="0" y1="0" x2="0" y2="1"><stop offset="0.46" stop-color="#bbc290"/><stop offset="0.54" stop-color="#c0c088"/></linearGradient></defs>
<rect x="621" y="528.5" width="106" height="140.5" fill="url(#gsw1)"/>
<rect x="621" y="528.5" width="106" height="140.5" fill="none" stroke="#fff" stroke-width="1.5"/>
<text x="674" y="685" font-size="13" fill="#f0f0f0" text-anchor="middle" font-weight="normal" >40%</text>
<defs><linearGradient id="gsw2" x1="0" y1="0" x2="0" y2="1"><stop offset="0.46" stop-color="#bbc478"/><stop offset="0.54" stop-color="#c2c070"/></linearGradient></defs>
<rect x="743.5" y="528.5" width="106" height="140.5" fill="url(#gsw2)"/>
<rect x="743.5" y="528.5" width="106" height="140.5" fill="none" stroke="#fff" stroke-width="1.5"/>
<text x="796.5" y="685" font-size="13" fill="#f0f0f0" text-anchor="middle" font-weight="normal" >60%</text>
<defs><linearGradient id="gsw3" x1="0" y1="0" x2="0" y2="1"><stop offset="0.46" stop-color="#bbbe55"/><stop offset="0.54" stop-color="#c2be4c"/></linearGradient></defs>
<rect x="866" y="528.5" width="106" height="140.5" fill="url(#gsw3)"/>
<rect x="866" y="528.5" width="106" height="140.5" fill="none" stroke="#fff" stroke-width="1.5"/>
<text x="919" y="685" font-size="13" fill="#f0f0f0" text-anchor="middle" font-weight="normal" >80%</text>
<defs><linearGradient id="gsw4" x1="0" y1="0" x2="0" y2="1"><stop offset="0.46" stop-color="#bec020"/><stop offset="0.54" stop-color="#c4c000"/></linearGradient></defs>
<rect x="990" y="528.5" width="106" height="140.5" fill="url(#gsw4)"/>
<rect x="990" y="528.5" width="106" height="140.5" fill="none" stroke="#fff" stroke-width="1.5"/>
<text x="1043" y="685" font-size="13" fill="#f0f0f0" text-anchor="middle" font-weight="normal" >100%</text>
<text transform="translate(489,558) rotate(-90)" font-size="13" fill="#f0f0f0" text-anchor="middle">Actual</text>
<text transform="translate(489,638) rotate(-90)" font-size="13" fill="#f0f0f0" text-anchor="middle">Target</text>
<rect x="1116.5" y="118.5" width="731" height="586" fill="none" stroke="#c8c40a" stroke-width="7"/>
<rect x="1151" y="147" width="690" height="523" fill="#232323"/>
<rect x="1150.75" y="146.75" width="690.5" height="523.5" fill="none" stroke="#a8a8a8" stroke-width="1.5"/>
<text x="1481" y="141" font-size="15.5" fill="#d8d8d8" text-anchor="middle" font-weight="normal" >CIE 1931 xy</text>
<rect x="1144" y="669.05" width="6" height="1.5" fill="#a8a8a8"/>
<text x="1144" y="675.8" font-size="15.5" fill="#d8d8d8" text-anchor="end" font-weight="normal" >0</text>
<rect x="1144" y="606.79" width="6" height="1.5" fill="#a8a8a8"/>
<text x="1144" y="613.54" font-size="15.5" fill="#d8d8d8" text-anchor="end" font-weight="normal" >0,1</text>
<rect x="1144" y="544.53" width="6" height="1.5" fill="#a8a8a8"/>
<text x="1144" y="551.28" font-size="15.5" fill="#d8d8d8" text-anchor="end" font-weight="normal" >0,2</text>
<rect x="1144" y="482.27" width="6" height="1.5" fill="#a8a8a8"/>
<text x="1144" y="489.02" font-size="15.5" fill="#d8d8d8" text-anchor="end" font-weight="normal" >0,3</text>
<rect x="1144" y="420.01" width="6" height="1.5" fill="#a8a8a8"/>
<text x="1144" y="426.75999999999993" font-size="15.5" fill="#d8d8d8" text-anchor="end" font-weight="normal" >0,4</text>
<rect x="1144" y="357.75" width="6" height="1.5" fill="#a8a8a8"/>
<text x="1144" y="364.49999999999994" font-size="15.5" fill="#d8d8d8" text-anchor="end" font-weight="normal" >0,5</text>
<rect x="1144" y="295.49" width="6" height="1.5" fill="#a8a8a8"/>
<text x="1144" y="302.23999999999995" font-size="15.5" fill="#d8d8d8" text-anchor="end" font-weight="normal" >0,6</text>
<rect x="1144" y="233.23" width="6" height="1.5" fill="#a8a8a8"/>
<text x="1144" y="239.97999999999996" font-size="15.5" fill="#d8d8d8" text-anchor="end" font-weight="normal" >0,7</text>
<rect x="1144" y="170.97" width="6" height="1.5" fill="#a8a8a8"/>
<text x="1144" y="177.7199999999999" font-size="15.5" fill="#d8d8d8" text-anchor="end" font-weight="normal" >0,8</text>
<rect x="1150.15" y="670" width="1.5" height="6" fill="#a8a8a8"/>
<text x="1150.9" y="694" font-size="15.5" fill="#d8d8d8" text-anchor="middle" font-weight="normal" >0</text>
<rect x="1232.27" y="670" width="1.5" height="6" fill="#a8a8a8"/>
<text x="1233.02" y="694" font-size="15.5" fill="#d8d8d8" text-anchor="middle" font-weight="normal" >0,1</text>
<rect x="1314.39" y="670" width="1.5" height="6" fill="#a8a8a8"/>
<text x="1315.14" y="694" font-size="15.5" fill="#d8d8d8" text-anchor="middle" font-weight="normal" >0,2</text>
<rect x="1396.51" y="670" width="1.5" height="6" fill="#a8a8a8"/>
<text x="1397.2600000000002" y="694" font-size="15.5" fill="#d8d8d8" text-anchor="middle" font-weight="normal" >0,3</text>
<rect x="1478.63" y="670" width="1.5" height="6" fill="#a8a8a8"/>
<text x="1479.38" y="694" font-size="15.5" fill="#d8d8d8" text-anchor="middle" font-weight="normal" >0,4</text>
<rect x="1560.75" y="670" width="1.5" height="6" fill="#a8a8a8"/>
<text x="1561.5" y="694" font-size="15.5" fill="#d8d8d8" text-anchor="middle" font-weight="normal" >0,5</text>
<rect x="1642.87" y="670" width="1.5" height="6" fill="#a8a8a8"/>
<text x="1643.6200000000001" y="694" font-size="15.5" fill="#d8d8d8" text-anchor="middle" font-weight="normal" >0,6</text>
<rect x="1724.99" y="670" width="1.5" height="6" fill="#a8a8a8"/>
<text x="1725.7400000000002" y="694" font-size="15.5" fill="#d8d8d8" text-anchor="middle" font-weight="normal" >0,7</text>
<rect x="1807.11" y="670" width="1.5" height="6" fill="#a8a8a8"/>
<text x="1807.8600000000001" y="694" font-size="15.5" fill="#d8d8d8" text-anchor="middle" font-weight="normal" >0,8</text>
<text x="91" y="770.5" font-size="29" fill="#f4f4f4" text-anchor="start" font-weight="normal" textLength="233" lengthAdjust="spacingAndGlyphs" stroke="#f4f4f4" stroke-width="0.5">Current Reading</text>
<text x="91" y="815" font-size="25.5" fill="#f0f0f0" text-anchor="start" font-weight="normal" textLength="110" lengthAdjust="spacingAndGlyphs" stroke="#f0f0f0" stroke-width="0.4">x: 0,4087</text>
<text x="91" y="859" font-size="25.5" fill="#f0f0f0" text-anchor="start" font-weight="normal" textLength="111" lengthAdjust="spacingAndGlyphs" stroke="#f0f0f0" stroke-width="0.4">y: 0,5026</text>
<text x="91" y="901" font-size="25.5" fill="#f0f0f0" text-anchor="start" font-weight="normal" textLength="88" lengthAdjust="spacingAndGlyphs" stroke="#f0f0f0" stroke-width="0.4">fL: 68,8</text>
<text x="91" y="945" font-size="25.5" fill="#f0f0f0" text-anchor="start" font-weight="normal" textLength="170" lengthAdjust="spacingAndGlyphs" stroke="#f0f0f0" stroke-width="0.4">cd/m²: 235,74</text>
<rect x="456" y="750" width="266.5" height="192" fill="#232323"/>
<rect x="456" y="797.25" width="266.5" height="1.5" fill="#a8a8a8"/>
<rect x="456" y="845.25" width="266.5" height="1.5" fill="#a8a8a8"/>
<rect x="456" y="893.25" width="266.5" height="1.5" fill="#a8a8a8"/>
<rect x="455.5" y="749.5" width="267.5" height="193" fill="none" stroke="#a8a8a8" stroke-width="2"/>
<rect x="450" y="749.25" width="6" height="1.5" fill="#a8a8a8"/>
<text x="451" y="756" font-size="15.5" fill="#d8d8d8" text-anchor="end" font-weight="normal" >120</text>
<rect x="450" y="797.25" width="6" height="1.5" fill="#a8a8a8"/>
<text x="451" y="804" font-size="15.5" fill="#d8d8d8" text-anchor="end" font-weight="normal" >110</text>
<rect x="450" y="845.25" width="6" height="1.5" fill="#a8a8a8"/>
<text x="451" y="852" font-size="15.5" fill="#d8d8d8" text-anchor="end" font-weight="normal" >100</text>
<rect x="450" y="893.25" width="6" height="1.5" fill="#a8a8a8"/>
<text x="451" y="900" font-size="15.5" fill="#d8d8d8" text-anchor="end" font-weight="normal" >90</text>
<rect x="450" y="941.25" width="6" height="1.5" fill="#a8a8a8"/>
<text x="451" y="948" font-size="15.5" fill="#d8d8d8" text-anchor="end" font-weight="normal" >80</text>
<rect x="455.25" y="942" width="1.5" height="6" fill="#a8a8a8"/>
<rect x="721.75" y="942" width="1.5" height="6" fill="#a8a8a8"/>
<text x="572.5" y="744" font-size="15.5" fill="#d8d8d8" text-anchor="middle" font-weight="normal" >RGB Balance</text>
<text x="589.5" y="958" font-size="15.5" fill="#d8d8d8" text-anchor="middle" font-weight="normal" >100%</text>
<defs><linearGradient id="gR" x1="0" y1="0" x2="0" y2="1"><stop offset="0" stop-color="#ff5a5a"/><stop offset="1" stop-color="#ff1010"/></linearGradient><linearGradient id="gG" x1="0" y1="0" x2="0" y2="1"><stop offset="0" stop-color="#50a850"/><stop offset="1" stop-color="#007a00"/></linearGradient><linearGradient id="gB" x1="0" y1="0" x2="0" y2="1"><stop offset="0" stop-color="#5a5aff"/><stop offset="1" stop-color="#0000f0"/></linearGradient></defs>
<rect x="482.5" y="856" width="69" height="86" fill="url(#gR)" stroke="#000" stroke-width="1.3"/>
<rect x="553" y="844.5" width="69.5" height="97.5" fill="url(#gG)" stroke="#000" stroke-width="1.3"/>
<rect x="624" y="791.5" width="70" height="150.5" fill="url(#gB)" stroke="#000" stroke-width="1.3"/>
<rect x="744" y="723" width="776" height="216" fill="#111"/>
<defs><linearGradient id="gHdr" x1="0" y1="0" x2="0" y2="1"><stop offset="0" stop-color="#363636"/><stop offset="0.46" stop-color="#2c2c2c"/><stop offset="0.46" stop-color="#131313"/><stop offset="1" stop-color="#0e0e0e"/></linearGradient></defs>
<rect x="746" y="725" width="772" height="31" fill="url(#gHdr)"/>
<text x="1008.5" y="749" font-size="19" fill="#f0f0f0" text-anchor="middle" font-weight="normal" textLength="43" lengthAdjust="spacingAndGlyphs" >20%</text>
<text x="1121.8" y="749" font-size="19" fill="#f0f0f0" text-anchor="middle" font-weight="normal" textLength="43" lengthAdjust="spacingAndGlyphs" >40%</text>
<text x="1234.9" y="749" font-size="19" fill="#f0f0f0" text-anchor="middle" font-weight="normal" textLength="43" lengthAdjust="spacingAndGlyphs" >60%</text>
<text x="1348.1" y="749" font-size="19" fill="#f0f0f0" text-anchor="middle" font-weight="normal" textLength="43" lengthAdjust="spacingAndGlyphs" >80%</text>
<text x="1461.3" y="749" font-size="19" fill="#f0f0f0" text-anchor="middle" font-weight="normal" textLength="52" lengthAdjust="spacingAndGlyphs" >100%</text>
<rect x="746" y="756.3" width="772" height="30.45" fill="#444444"/>
<text x="764.5" y="779.3" font-size="20" fill="#f4f4f4" text-anchor="start" font-weight="bold" textLength="92" lengthAdjust="spacingAndGlyphs" >x: CIE31</text>
<text x="958" y="779.3" font-size="20" fill="#f0f0f0" text-anchor="start" font-weight="normal" textLength="73" lengthAdjust="spacingAndGlyphs" >0,3214</text>
<text x="1071.3" y="779.3" font-size="20" fill="#f0f0f0" text-anchor="start" font-weight="normal" textLength="73" lengthAdjust="spacingAndGlyphs" >0,3436</text>
<text x="1184.4" y="779.3" font-size="20" fill="#f0f0f0" text-anchor="start" font-weight="normal" textLength="73" lengthAdjust="spacingAndGlyphs" >0,3649</text>
<text x="1297.6" y="779.3" font-size="20" fill="#f0f0f0" text-anchor="start" font-weight="normal" textLength="73" lengthAdjust="spacingAndGlyphs" >0,3856</text>
<text x="1410.8" y="779.3" font-size="20" fill="#f0f0f0" text-anchor="start" font-weight="normal" textLength="73" lengthAdjust="spacingAndGlyphs" >0,4087</text>
<rect x="746" y="786.8" width="772" height="30.45" fill="#797979"/>
<text x="764.5" y="809.75" font-size="20" fill="#f4f4f4" text-anchor="start" font-weight="bold" textLength="92" lengthAdjust="spacingAndGlyphs" >y: CIE31</text>
<text x="958" y="809.75" font-size="20" fill="#f0f0f0" text-anchor="start" font-weight="normal" textLength="73" lengthAdjust="spacingAndGlyphs" >0,3578</text>
<text x="1071.3" y="809.75" font-size="20" fill="#f0f0f0" text-anchor="start" font-weight="normal" textLength="73" lengthAdjust="spacingAndGlyphs" >0,3948</text>
<text x="1184.4" y="809.75" font-size="20" fill="#f0f0f0" text-anchor="start" font-weight="normal" textLength="73" lengthAdjust="spacingAndGlyphs" >0,4302</text>
<text x="1297.6" y="809.75" font-size="20" fill="#f0f0f0" text-anchor="start" font-weight="normal" textLength="73" lengthAdjust="spacingAndGlyphs" >0,4645</text>
<text x="1410.8" y="809.75" font-size="20" fill="#f0f0f0" text-anchor="start" font-weight="normal" textLength="73" lengthAdjust="spacingAndGlyphs" >0,5026</text>
<rect x="746" y="817.2" width="772" height="30.45" fill="#444444"/>
<text x="764.5" y="840.1999999999999" font-size="20" fill="#f4f4f4" text-anchor="start" font-weight="bold" textLength="14" lengthAdjust="spacingAndGlyphs" >Y</text>
<text x="958" y="840.1999999999999" font-size="20" fill="#f0f0f0" text-anchor="start" font-weight="normal" textLength="99.5" lengthAdjust="spacingAndGlyphs" >251,7597</text>
<text x="1071.3" y="840.1999999999999" font-size="20" fill="#f0f0f0" text-anchor="start" font-weight="normal" textLength="99.5" lengthAdjust="spacingAndGlyphs" >246,7003</text>
<text x="1184.4" y="840.1999999999999" font-size="20" fill="#f0f0f0" text-anchor="start" font-weight="normal" textLength="99.5" lengthAdjust="spacingAndGlyphs" >242,7543</text>
<text x="1297.6" y="840.1999999999999" font-size="20" fill="#f0f0f0" text-anchor="start" font-weight="normal" textLength="99.5" lengthAdjust="spacingAndGlyphs" >239,4946</text>
<text x="1410.8" y="840.1999999999999" font-size="20" fill="#f0f0f0" text-anchor="start" font-weight="normal" textLength="99.5" lengthAdjust="spacingAndGlyphs" >235,7377</text>
<rect x="746" y="847.6" width="772" height="30.45" fill="#797979"/>
<text x="764.5" y="870.65" font-size="20" fill="#f4f4f4" text-anchor="start" font-weight="bold" textLength="167" lengthAdjust="spacingAndGlyphs" >Target x:CIE31</text>
<text x="958" y="870.65" font-size="20" fill="#f0f0f0" text-anchor="start" font-weight="normal" textLength="73" lengthAdjust="spacingAndGlyphs" >0,3344</text>
<text x="1071.3" y="870.65" font-size="20" fill="#f0f0f0" text-anchor="start" font-weight="normal" textLength="73" lengthAdjust="spacingAndGlyphs" >0,3564</text>
<text x="1184.4" y="870.65" font-size="20" fill="#f0f0f0" text-anchor="start" font-weight="normal" textLength="73" lengthAdjust="spacingAndGlyphs" >0,3773</text>
<text x="1297.6" y="870.65" font-size="20" fill="#f0f0f0" text-anchor="start" font-weight="normal" textLength="73" lengthAdjust="spacingAndGlyphs" >0,3969</text>
<text x="1410.8" y="870.65" font-size="20" fill="#f0f0f0" text-anchor="start" font-weight="normal" textLength="73" lengthAdjust="spacingAndGlyphs" >0,4193</text>
<rect x="746" y="878.1" width="772" height="30.45" fill="#444444"/>
<text x="764.5" y="901.0999999999999" font-size="20" fill="#f4f4f4" text-anchor="start" font-weight="bold" textLength="167" lengthAdjust="spacingAndGlyphs" >Target y:CIE31</text>
<text x="958" y="901.0999999999999" font-size="20" fill="#f0f0f0" text-anchor="start" font-weight="normal" textLength="73" lengthAdjust="spacingAndGlyphs" >0,3648</text>
<text x="1071.3" y="901.0999999999999" font-size="20" fill="#f0f0f0" text-anchor="start" font-weight="normal" textLength="73" lengthAdjust="spacingAndGlyphs" >0,4013</text>
<text x="1184.4" y="901.0999999999999" font-size="20" fill="#f0f0f0" text-anchor="start" font-weight="normal" textLength="73" lengthAdjust="spacingAndGlyphs" >0,4358</text>
<text x="1297.6" y="901.0999999999999" font-size="20" fill="#f0f0f0" text-anchor="start" font-weight="normal" textLength="73" lengthAdjust="spacingAndGlyphs" >0,4682</text>
<text x="1410.8" y="901.0999999999999" font-size="20" fill="#f0f0f0" text-anchor="start" font-weight="normal" textLength="73" lengthAdjust="spacingAndGlyphs" >0,5053</text>
<rect x="746" y="908.5" width="772" height="30.45" fill="#797979"/>
<text x="764.5" y="931.55" font-size="20" fill="#f4f4f4" text-anchor="start" font-weight="bold" textLength="97" lengthAdjust="spacingAndGlyphs" >Target Y</text>
<text x="958" y="931.55" font-size="20" fill="#f0f0f0" text-anchor="start" font-weight="normal" textLength="99.5" lengthAdjust="spacingAndGlyphs" >249,9201</text>
<text x="1071.3" y="931.55" font-size="20" fill="#f0f0f0" text-anchor="start" font-weight="normal" textLength="99.5" lengthAdjust="spacingAndGlyphs" >245,5333</text>
<text x="1184.4" y="931.55" font-size="20" fill="#f0f0f0" text-anchor="start" font-weight="normal" textLength="99.5" lengthAdjust="spacingAndGlyphs" >242,1626</text>
<text x="1297.6" y="931.55" font-size="20" fill="#f0f0f0" text-anchor="start" font-weight="normal" textLength="99.5" lengthAdjust="spacingAndGlyphs" >239,5173</text>
<text x="1410.8" y="931.55" font-size="20" fill="#f0f0f0" text-anchor="start" font-weight="normal" textLength="99.5" lengthAdjust="spacingAndGlyphs" >236,9599</text>
<rect x="0" y="967" width="1920" height="72" fill="#2b2b2b"/>
<defs><linearGradient id="gBB" x1="0" y1="0" x2="0" y2="1"><stop offset="0" stop-color="#a4a4a4"/><stop offset="0.5" stop-color="#8a8a8a"/><stop offset="1" stop-color="#5e5e5e"/></linearGradient><linearGradient id="gBBs" x1="0" y1="0" x2="0" y2="1"><stop offset="0" stop-color="#181818"/><stop offset="1" stop-color="#383838"/></linearGradient><linearGradient id="gPanel" x1="0" y1="0" x2="0" y2="1"><stop offset="0" stop-color="#4a4a4a"/><stop offset="1" stop-color="#242424"/></linearGradient><radialGradient id="gKnob" cx="0.5" cy="0.35" r="0.65"><stop offset="0" stop-color="#777"/><stop offset="1" stop-color="#a8a8a8"/></radialGradient><radialGradient id="gKnobD" cx="0.5" cy="0.3" r="0.7"><stop offset="0" stop-color="#505050"/><stop offset="0.7" stop-color="#6a6a6a"/><stop offset="1" stop-color="#9a9a9a"/></radialGradient></defs>
<rect x="910" y="969" width="653" height="70" fill="url(#gPanel)"/>
<rect x="1.5" y="969.5" width="51" height="68" rx="5" fill="url(#gBB)"/>
<circle cx="26.7" cy="979.3" r="8.5" fill="url(#gKnobD)"/>
<path d="M21.5 982 L26.7 976.5 L32 982 Z" fill="#222"/>
<rect x="7.5" y="999" width="39" height="33.5" rx="4" fill="#ffff00" stroke="#b0b000" stroke-width="1"/>
<rect x="59.2" y="969.5" width="168.5" height="68" rx="5" fill="url(#gBB)"/>
<rect x="65.2" y="975.4" width="157.5" height="39.7" rx="5" fill="#c3c3a2" stroke="#888866" stroke-width="1.2"/>
<text x="143.4" y="1033" font-size="12" fill="#2a2a2a" text-anchor="middle" font-weight="bold" >20%</text>
<rect x="230.5" y="969.5" width="168.5" height="68" rx="5" fill="url(#gBB)"/>
<rect x="236.5" y="975.4" width="157.5" height="39.7" rx="5" fill="#c4c48a" stroke="#888866" stroke-width="1.2"/>
<text x="314.7" y="1033" font-size="12" fill="#2a2a2a" text-anchor="middle" font-weight="bold" >40%</text>
<rect x="401.8" y="969.5" width="168.5" height="68" rx="5" fill="url(#gBB)"/>
<rect x="407.8" y="975.4" width="157.5" height="39.7" rx="5" fill="#c3c272" stroke="#888866" stroke-width="1.2"/>
<text x="486.0" y="1033" font-size="12" fill="#2a2a2a" text-anchor="middle" font-weight="bold" >60%</text>
<rect x="573.1" y="969.5" width="168.5" height="68" rx="5" fill="url(#gBB)"/>
<rect x="579.1" y="975.4" width="157.5" height="39.7" rx="5" fill="#c2c04e" stroke="#888866" stroke-width="1.2"/>
<text x="657.3000000000001" y="1033" font-size="12" fill="#2a2a2a" text-anchor="middle" font-weight="bold" >80%</text>
<rect x="744.4" y="969.5" width="168.5" height="68" rx="5" fill="url(#gBBs)"/>
<rect x="750.4" y="974" width="157.5" height="41" rx="5" fill="#c8c400" stroke="#9a9600" stroke-width="1.2"/>
<text x="828.6" y="1033" font-size="12" fill="#ffffff" text-anchor="middle" font-weight="bold" >100%</text>
<rect x="1563" y="969" width="54" height="20" rx="4" fill="url(#gBB)"/>
<circle cx="1590" cy="978.5" r="8.5" fill="url(#gKnobD)"/>
<path d="M1585 981 L1590 976 L1595 981 Z" fill="#222"/>
<rect x="1563" y="990" width="54" height="47" rx="4" fill="url(#gBB)"/>
<rect x="1573.5" y="997.5" width="33" height="33" rx="4" fill="#a8a8a8" stroke="#222" stroke-width="3"/>
<rect x="1583" y="1006.5" width="15" height="15" fill="#000"/>
<rect x="1583" y="1006.5" width="15" height="7" fill="#333"/>
<rect x="1619.2" y="969" width="255.5" height="33.5" rx="2" fill="url(#gBB)"/>
<circle cx="1645.0" cy="985.5" r="11" fill="url(#gKnob)"/>
<rect x="1669.9" y="969" width="1.6" height="33.5" fill="#2a2a2a"/>
<circle cx="1696.2" cy="985.5" r="11" fill="url(#gKnob)"/>
<rect x="1721.0" y="969" width="1.6" height="33.5" fill="#2a2a2a"/>
<circle cx="1747.2" cy="985.5" r="11" fill="url(#gKnob)"/>
<rect x="1771.9" y="969" width="1.6" height="33.5" fill="#2a2a2a"/>
<circle cx="1798.2" cy="985.5" r="11" fill="url(#gKnob)"/>
<rect x="1822.8" y="969" width="1.6" height="33.5" fill="#2a2a2a"/>
<circle cx="1849.2" cy="985.5" r="11" fill="url(#gKnob)"/>
<rect x="1640.5" y="981" width="8.5" height="8.5" fill="#2e2e2e"/>
<path d="M1693 980 L1702.5 986 L1693 992 Z" fill="#2e2e2e"/>
<path d="M1743.5 979.5 H1741.5 V991.5 H1743.5 M1750.5 979.5 H1752.5 V991.5 H1750.5" fill="none" stroke="#2e2e2e" stroke-width="2"/>
<rect x="1744.6" y="984.6" width="1.8" height="1.8" fill="#2e2e2e"/><rect x="1747.6" y="984.6" width="1.8" height="1.8" fill="#2e2e2e"/>
<path d="M1798.5 985.5 C1796 982.2 1792.2 982.2 1792.2 985.5 C1792.2 988.8 1796 988.8 1798.5 985.5 C1801 982.2 1804.8 982.2 1804.8 985.5 C1804.8 988.8 1801 988.8 1798.5 985.5 Z" fill="none" stroke="#2e2e2e" stroke-width="2"/>
<path d="M1843.5 985 A5.5 5.5 0 0 1 1853 981.5 M1854.5 986.5 A5.5 5.5 0 0 1 1845 990" fill="none" stroke="#2e2e2e" stroke-width="2.3"/>
<path d="M1855.5 978.5 L1855.5 984.5 L1849.5 984 Z M1842.5 993 L1842.5 987 L1848.5 987.5 Z" fill="#2e2e2e"/>
<defs><linearGradient id="gDk" x1="0" y1="0" x2="0" y2="1"><stop offset="0" stop-color="#1c1c1c"/><stop offset="1" stop-color="#2c2c2c"/></linearGradient></defs>
<rect x="1875" y="969" width="45" height="34" fill="url(#gDk)"/>
<circle cx="1901" cy="986" r="11" fill="#303030"/>
<rect x="1619.2" y="1004.5" width="153" height="33" rx="2" fill="url(#gBB)"/>
<rect x="1773.5" y="1004.5" width="150" height="33" rx="2" fill="url(#gBB)"/>
<circle cx="1653.3" cy="1020.4" r="11" fill="url(#gKnob)"/>
<circle cx="1894.5" cy="1020.4" r="11" fill="url(#gKnob)"/>
<text x="1653.3" y="1027" font-size="18" fill="#333" text-anchor="middle" font-weight="bold">«</text>
<text x="1894.5" y="1027" font-size="18" fill="#333" text-anchor="middle" font-weight="bold">»</text>
<text x="1684" y="1030.5" font-size="25" fill="#333" text-anchor="start" font-weight="bold" textLength="57" lengthAdjust="spacingAndGlyphs" >Back</text>
<text x="1804" y="1030.5" font-size="25" fill="#333" text-anchor="start" font-weight="bold" textLength="58.5" lengthAdjust="spacingAndGlyphs" >Next</text>
</svg>
<div style="position:absolute;left:1151px;top:147px;width:690px;height:523px;background:conic-gradient(from 0deg at 256.7px 318.0px, #019900 0deg, #0e9900 4deg, #1c9900 8deg, #299900 12deg, #379900 16deg, #469900 20deg, #559900 24deg, #669900 28deg, #779900 32deg, #8b9900 36deg, #999100 40deg, #997e00 44deg, #996d00 48deg, #995f00 52deg, #995200 56deg, #994500 60deg, #993b00 64deg, #993000 68deg, #992600 72deg, #991d00 76deg, #991400 80deg, #990b00 84deg, #990200 88deg, #990000 92deg, #990004 96deg, #99000c 100deg, #990013 104deg, #990019 108deg, #990020 112deg, #990026 116deg, #99002c 120deg, #990032 124deg, #990038 128deg, #99003d 132deg, #990043 136deg, #99004a 140deg, #990050 144deg, #990056 148deg, #99005d 152deg, #990065 156deg, #99006d 160deg, #990075 164deg, #99007f 168deg, #99008a 172deg, #990097 176deg, #8c0099 180deg, #7e0099 184deg, #710099 188deg, #630099 192deg, #540099 196deg, #460099 200deg, #360099 204deg, #270099 208deg, #170099 212deg, #070099 216deg, #000299 220deg, #000f99 224deg, #001b99 228deg, #002699 232deg, #003199 236deg, #003c99 240deg, #004799 244deg, #005299 248deg, #005e99 252deg, #006a99 256deg, #007699 260deg, #008399 264deg, #009199 268deg, #009991 272deg, #009983 276deg, #009976 280deg, #00996a 284deg, #00995f 288deg, #009955 292deg, #00994b 296deg, #009941 300deg, #009938 304deg, #00992f 308deg, #009927 312deg, #00991f 316deg, #009917 320deg, #009911 324deg, #00990c 328deg, #009908 332deg, #009906 336deg, #009904 340deg, #009901 344deg, #009900 348deg, #009900 352deg, #009900 356deg, #019900 360deg);clip-path:path('M143.3 518.5 L142.6 518.6 L141.7 518.6 L141.1 518.4 L140.5 518.1 L139.9 517.8 L139.3 517.4 L138.6 517.0 L138.0 516.6 L137.4 516.2 L136.8 515.8 L136.1 515.3 L135.4 514.8 L134.6 514.3 L133.7 513.7 L133.2 513.3 L132.7 513.0 L132.1 512.6 L131.6 512.3 L131.0 511.9 L130.3 511.5 L129.7 511.0 L129.0 510.6 L128.3 510.1 L127.6 509.6 L126.8 509.2 L126.1 508.6 L125.3 508.1 L124.4 507.5 L123.6 506.9 L122.7 506.2 L121.7 505.5 L120.7 504.8 L119.7 504.0 L118.7 503.2 L117.6 502.3 L116.6 501.4 L115.5 500.4 L114.3 499.4 L113.1 498.2 L111.8 496.8 L110.4 495.3 L108.9 493.7 L107.4 492.0 L105.8 490.1 L104.2 488.0 L102.4 485.7 L100.7 483.3 L98.8 480.7 L96.9 477.8 L94.9 474.8 L92.8 471.5 L90.6 467.8 L88.3 463.8 L86.0 459.6 L83.5 455.1 L81.0 450.2 L78.4 445.0 L75.6 439.3 L72.8 433.3 L69.8 426.9 L66.7 420.2 L63.5 413.0 L60.3 405.3 L57.2 397.2 L54.0 388.6 L50.8 379.5 L47.6 369.9 L44.4 360.0 L41.3 349.6 L38.1 338.8 L35.0 327.5 L31.9 315.8 L28.8 303.6 L25.8 291.1 L22.9 278.5 L20.2 265.9 L17.7 253.1 L15.3 240.1 L13.1 226.9 L11.0 213.7 L9.2 200.7 L7.7 188.0 L6.5 175.5 L5.5 163.1 L4.7 150.8 L4.2 138.8 L4.0 127.1 L4.2 115.9 L4.8 105.1 L5.6 94.5 L6.8 84.2 L8.3 74.5 L10.2 65.3 L12.4 56.8 L15.0 48.9 L18.0 41.6 L21.3 34.8 L24.9 28.7 L28.8 23.2 L32.8 18.5 L37.1 14.6 L41.7 11.5 L46.5 9.1 L51.5 7.3 L56.6 5.9 L61.8 5.0 L67.0 4.7 L72.3 5.0 L77.8 5.7 L83.3 6.9 L88.9 8.3 L94.4 9.7 L99.9 11.3 L105.4 13.2 L111.0 15.4 L116.5 17.6 L122.0 20.0 L127.4 22.3 L132.8 24.7 L138.0 27.1 L143.3 29.6 L148.4 32.1 L153.6 34.7 L158.7 37.4 L163.7 40.1 L168.8 42.8 L173.8 45.6 L178.7 48.4 L183.7 51.3 L188.7 54.3 L193.6 57.3 L198.6 60.3 L203.5 63.4 L208.4 66.5 L213.3 69.7 L218.2 72.9 L223.1 76.1 L228.0 79.3 L232.9 82.6 L237.7 86.0 L242.6 89.3 L247.5 92.7 L252.3 96.1 L257.2 99.5 L262.1 102.9 L266.9 106.4 L271.8 109.9 L276.7 113.4 L281.5 116.9 L286.4 120.4 L291.3 124.0 L296.2 127.5 L301.0 131.1 L305.9 134.7 L310.8 138.3 L315.6 141.9 L320.5 145.5 L325.3 149.1 L330.2 152.7 L335.0 156.3 L339.8 159.9 L344.7 163.5 L349.5 167.1 L354.3 170.7 L359.1 174.3 L363.9 177.9 L368.7 181.5 L373.4 185.1 L378.2 188.7 L382.9 192.2 L387.6 195.8 L392.3 199.3 L396.9 202.8 L401.6 206.3 L406.2 209.8 L410.7 213.3 L415.3 216.7 L419.8 220.1 L424.3 223.5 L428.7 226.9 L433.2 230.2 L437.6 233.5 L441.9 236.8 L446.2 240.1 L450.5 243.3 L454.7 246.4 L458.9 249.6 L463.0 252.7 L467.0 255.8 L471.0 258.8 L475.0 261.7 L478.9 264.7 L482.7 267.6 L486.4 270.4 L490.1 273.2 L493.7 275.9 L497.2 278.6 L500.5 281.1 L503.8 283.6 L507.1 286.1 L510.3 288.4 L513.4 290.8 L516.4 293.1 L519.4 295.4 L522.4 297.6 L525.2 299.7 L528.0 301.8 L530.7 303.9 L533.3 305.8 L535.8 307.7 L538.2 309.5 L540.6 311.3 L542.9 313.0 L545.1 314.6 L547.2 316.3 L549.2 317.8 L551.2 319.3 L553.1 320.8 L555.0 322.2 L556.8 323.5 L558.5 324.8 L560.1 326.0 L561.7 327.2 L563.2 328.4 L564.6 329.5 L566.1 330.6 L567.4 331.6 L568.7 332.6 L570.0 333.5 L571.2 334.4 L572.4 335.3 L573.5 336.1 L574.6 337.0 L575.6 337.8 L576.6 338.5 L577.6 339.2 L578.5 340.0 L579.5 340.7 L580.4 341.3 L581.2 342.0 L582.1 342.6 L582.9 343.3 L583.7 343.9 L584.5 344.4 L585.2 345.0 L585.9 345.5 L586.6 346.1 L587.3 346.6 L587.9 347.1 L588.5 347.5 L589.1 348.0 L589.7 348.4 L590.3 348.8 L590.8 349.2 L591.3 349.6 L591.8 350.0 L592.3 350.3 L593.1 350.9 L593.9 351.5 L594.6 352.1 L595.3 352.6 L595.9 353.0 L596.4 353.4 L596.9 353.9 L597.5 354.3 Z')"></div>
<svg width="1920" height="1039" viewBox="0 0 1920 1039" style="position:absolute;left:0;top:0"><path d="M1676.5 464.3L1663.8 456.7L1658.2 472.0Z" fill="#ff0202" stroke="#ff0202" stroke-width="0.6"/><path d="M1663.8 456.7L1645.5 464.3L1658.2 472.0Z" fill="#ff0404" stroke="#ff0404" stroke-width="0.6"/><path d="M1658.2 472.0L1645.5 464.3L1639.9 479.6Z" fill="#ff0208" stroke="#ff0208" stroke-width="0.6"/><path d="M1645.5 464.3L1627.2 472.0L1639.9 479.6Z" fill="#ff040b" stroke="#ff040b" stroke-width="0.6"/><path d="M1639.9 479.6L1627.2 472.0L1621.6 487.3Z" fill="#ff0210" stroke="#ff0210" stroke-width="0.6"/><path d="M1627.2 472.0L1608.9 479.6L1621.6 487.3Z" fill="#ff0413" stroke="#ff0413" stroke-width="0.6"/><path d="M1621.6 487.3L1608.9 479.6L1603.3 494.9Z" fill="#ff0218" stroke="#ff0218" stroke-width="0.6"/><path d="M1608.9 479.6L1590.6 487.3L1603.3 494.9Z" fill="#ff051c" stroke="#ff051c" stroke-width="0.6"/><path d="M1603.3 494.9L1590.6 487.3L1585.0 502.5Z" fill="#ff0222" stroke="#ff0222" stroke-width="0.6"/><path d="M1590.6 487.3L1572.3 494.9L1585.0 502.5Z" fill="#ff0526" stroke="#ff0526" stroke-width="0.6"/><path d="M1585.0 502.5L1572.3 494.9L1566.7 510.2Z" fill="#ff022c" stroke="#ff022c" stroke-width="0.6"/><path d="M1572.3 494.9L1554.0 502.5L1566.7 510.2Z" fill="#ff0531" stroke="#ff0531" stroke-width="0.6"/><path d="M1566.7 510.2L1554.0 502.5L1548.4 517.8Z" fill="#ff0338" stroke="#ff0338" stroke-width="0.6"/><path d="M1554.0 502.5L1535.7 510.2L1548.4 517.8Z" fill="#ff063e" stroke="#ff063e" stroke-width="0.6"/><path d="M1548.4 517.8L1535.7 510.2L1530.1 525.5Z" fill="#ff0345" stroke="#ff0345" stroke-width="0.6"/><path d="M1535.7 510.2L1517.5 517.8L1530.1 525.5Z" fill="#ff064c" stroke="#ff064c" stroke-width="0.6"/><path d="M1530.1 525.5L1517.5 517.8L1511.9 533.1Z" fill="#ff0355" stroke="#ff0355" stroke-width="0.6"/><path d="M1517.5 517.8L1499.2 525.5L1511.9 533.1Z" fill="#ff075d" stroke="#ff075d" stroke-width="0.6"/><path d="M1511.9 533.1L1499.2 525.5L1493.6 540.8Z" fill="#ff0367" stroke="#ff0367" stroke-width="0.6"/><path d="M1499.2 525.5L1480.9 533.1L1493.6 540.8Z" fill="#ff0771" stroke="#ff0771" stroke-width="0.6"/><path d="M1493.6 540.8L1480.9 533.1L1475.3 548.4Z" fill="#ff047c" stroke="#ff047c" stroke-width="0.6"/><path d="M1480.9 533.1L1462.6 540.8L1475.3 548.4Z" fill="#ff0888" stroke="#ff0888" stroke-width="0.6"/><path d="M1475.3 548.4L1462.6 540.8L1457.0 556.0Z" fill="#ff0495" stroke="#ff0495" stroke-width="0.6"/><path d="M1462.6 540.8L1444.3 548.4L1457.0 556.0Z" fill="#ff09a4" stroke="#ff09a4" stroke-width="0.6"/><path d="M1457.0 556.0L1444.3 548.4L1438.7 563.7Z" fill="#ff04b4" stroke="#ff04b4" stroke-width="0.6"/><path d="M1444.3 548.4L1426.0 556.0L1438.7 563.7Z" fill="#ff0ac7" stroke="#ff0ac7" stroke-width="0.6"/><path d="M1438.7 563.7L1426.0 556.0L1420.4 571.3Z" fill="#ff05da" stroke="#ff05da" stroke-width="0.6"/><path d="M1426.0 556.0L1407.7 563.7L1420.4 571.3Z" fill="#ff0cf3" stroke="#ff0cf3" stroke-width="0.6"/><path d="M1420.4 571.3L1407.7 563.7L1402.1 579.0Z" fill="#f306ff" stroke="#f306ff" stroke-width="0.6"/><path d="M1407.7 563.7L1389.4 571.3L1402.1 579.0Z" fill="#d80bff" stroke="#d80bff" stroke-width="0.6"/><path d="M1402.1 579.0L1389.4 571.3L1383.8 586.6Z" fill="#c405ff" stroke="#c405ff" stroke-width="0.6"/><path d="M1389.4 571.3L1371.1 579.0L1383.8 586.6Z" fill="#ac0aff" stroke="#ac0aff" stroke-width="0.6"/><path d="M1383.8 586.6L1371.1 579.0L1365.5 594.2Z" fill="#9b05ff" stroke="#9b05ff" stroke-width="0.6"/><path d="M1371.1 579.0L1352.8 586.6L1365.5 594.2Z" fill="#850aff" stroke="#850aff" stroke-width="0.6"/><path d="M1365.5 594.2L1352.8 586.6L1347.2 601.9Z" fill="#7704ff" stroke="#7704ff" stroke-width="0.6"/><path d="M1352.8 586.6L1334.6 594.2L1347.2 601.9Z" fill="#6209ff" stroke="#6209ff" stroke-width="0.6"/><path d="M1347.2 601.9L1334.6 594.2L1329.0 609.5Z" fill="#5604ff" stroke="#5604ff" stroke-width="0.6"/><path d="M1334.6 594.2L1316.3 601.9L1329.0 609.5Z" fill="#4409ff" stroke="#4409ff" stroke-width="0.6"/><path d="M1329.0 609.5L1316.3 601.9L1310.7 617.2Z" fill="#3904ff" stroke="#3904ff" stroke-width="0.6"/><path d="M1316.3 601.9L1298.0 609.5L1310.7 617.2Z" fill="#2808ff" stroke="#2808ff" stroke-width="0.6"/><path d="M1310.7 617.2L1298.0 609.5L1292.4 624.8Z" fill="#1f04ff" stroke="#1f04ff" stroke-width="0.6"/><path d="M1298.0 609.5L1279.7 617.2L1292.4 624.8Z" fill="#0f08ff" stroke="#0f08ff" stroke-width="0.6"/><path d="M1292.4 624.8L1279.7 617.2L1274.1 632.4Z" fill="#0704ff" stroke="#0704ff" stroke-width="0.6"/><path d="M1663.8 456.7L1651.1 449.1L1645.5 464.3Z" fill="#ff0902" stroke="#ff0902" stroke-width="0.6"/><path d="M1651.1 449.1L1632.8 456.7L1645.5 464.3Z" fill="#ff0b04" stroke="#ff0b04" stroke-width="0.6"/><path d="M1645.5 464.3L1632.8 456.7L1627.2 472.0Z" fill="#ff0909" stroke="#ff0909" stroke-width="0.6"/><path d="M1632.8 456.7L1614.5 464.3L1627.2 472.0Z" fill="#ff0c0c" stroke="#ff0c0c" stroke-width="0.6"/><path d="M1627.2 472.0L1614.5 464.3L1608.9 479.6Z" fill="#ff0a11" stroke="#ff0a11" stroke-width="0.6"/><path d="M1614.5 464.3L1596.2 472.0L1608.9 479.6Z" fill="#ff0d14" stroke="#ff0d14" stroke-width="0.6"/><path d="M1608.9 479.6L1596.2 472.0L1590.6 487.3Z" fill="#ff0a1a" stroke="#ff0a1a" stroke-width="0.6"/><path d="M1596.2 472.0L1577.9 479.6L1590.6 487.3Z" fill="#ff0d1e" stroke="#ff0d1e" stroke-width="0.6"/><path d="M1590.6 487.3L1577.9 479.6L1572.3 494.9Z" fill="#ff0b24" stroke="#ff0b24" stroke-width="0.6"/><path d="M1577.9 479.6L1559.6 487.3L1572.3 494.9Z" fill="#ff0e28" stroke="#ff0e28" stroke-width="0.6"/><path d="M1572.3 494.9L1559.6 487.3L1554.0 502.5Z" fill="#ff0c2f" stroke="#ff0c2f" stroke-width="0.6"/><path d="M1559.6 487.3L1541.3 494.9L1554.0 502.5Z" fill="#ff0f34" stroke="#ff0f34" stroke-width="0.6"/><path d="M1554.0 502.5L1541.3 494.9L1535.7 510.2Z" fill="#ff0c3c" stroke="#ff0c3c" stroke-width="0.6"/><path d="M1541.3 494.9L1523.1 502.5L1535.7 510.2Z" fill="#ff1042" stroke="#ff1042" stroke-width="0.6"/><path d="M1535.7 510.2L1523.1 502.5L1517.5 517.8Z" fill="#ff0d4b" stroke="#ff0d4b" stroke-width="0.6"/><path d="M1523.1 502.5L1504.8 510.2L1517.5 517.8Z" fill="#ff1252" stroke="#ff1252" stroke-width="0.6"/><path d="M1517.5 517.8L1504.8 510.2L1499.2 525.5Z" fill="#ff0e5c" stroke="#ff0e5c" stroke-width="0.6"/><path d="M1504.8 510.2L1486.5 517.8L1499.2 525.5Z" fill="#ff1365" stroke="#ff1365" stroke-width="0.6"/><path d="M1499.2 525.5L1486.5 517.8L1480.9 533.1Z" fill="#ff1070" stroke="#ff1070" stroke-width="0.6"/><path d="M1486.5 517.8L1468.2 525.5L1480.9 533.1Z" fill="#ff157b" stroke="#ff157b" stroke-width="0.6"/><path d="M1480.9 533.1L1468.2 525.5L1462.6 540.8Z" fill="#ff1188" stroke="#ff1188" stroke-width="0.6"/><path d="M1468.2 525.5L1449.9 533.1L1462.6 540.8Z" fill="#ff1796" stroke="#ff1796" stroke-width="0.6"/><path d="M1462.6 540.8L1449.9 533.1L1444.3 548.4Z" fill="#ff13a5" stroke="#ff13a5" stroke-width="0.6"/><path d="M1449.9 533.1L1431.6 540.8L1444.3 548.4Z" fill="#ff1ab7" stroke="#ff1ab7" stroke-width="0.6"/><path d="M1444.3 548.4L1431.6 540.8L1426.0 556.0Z" fill="#ff16ca" stroke="#ff16ca" stroke-width="0.6"/><path d="M1431.6 540.8L1413.3 548.4L1426.0 556.0Z" fill="#ff1de1" stroke="#ff1de1" stroke-width="0.6"/><path d="M1426.0 556.0L1413.3 548.4L1407.7 563.7Z" fill="#ff19f8" stroke="#ff19f8" stroke-width="0.6"/><path d="M1413.3 548.4L1395.0 556.0L1407.7 563.7Z" fill="#e81fff" stroke="#e81fff" stroke-width="0.6"/><path d="M1407.7 563.7L1395.0 556.0L1389.4 571.3Z" fill="#d217ff" stroke="#d217ff" stroke-width="0.6"/><path d="M1395.0 556.0L1376.7 563.7L1389.4 571.3Z" fill="#b71dff" stroke="#b71dff" stroke-width="0.6"/><path d="M1389.4 571.3L1376.7 563.7L1371.1 579.0Z" fill="#a516ff" stroke="#a516ff" stroke-width="0.6"/><path d="M1376.7 563.7L1358.4 571.3L1371.1 579.0Z" fill="#8d1bff" stroke="#8d1bff" stroke-width="0.6"/><path d="M1371.1 579.0L1358.4 571.3L1352.8 586.6Z" fill="#7e15ff" stroke="#7e15ff" stroke-width="0.6"/><path d="M1358.4 571.3L1340.1 579.0L1352.8 586.6Z" fill="#6819ff" stroke="#6819ff" stroke-width="0.6"/><path d="M1352.8 586.6L1340.1 579.0L1334.6 594.2Z" fill="#5b13ff" stroke="#5b13ff" stroke-width="0.6"/><path d="M1340.1 579.0L1321.9 586.6L1334.6 594.2Z" fill="#4718ff" stroke="#4718ff" stroke-width="0.6"/><path d="M1334.6 594.2L1321.9 586.6L1316.3 601.9Z" fill="#3c12ff" stroke="#3c12ff" stroke-width="0.6"/><path d="M1321.9 586.6L1303.6 594.2L1316.3 601.9Z" fill="#2a16ff" stroke="#2a16ff" stroke-width="0.6"/><path d="M1316.3 601.9L1303.6 594.2L1298.0 609.5Z" fill="#2011ff" stroke="#2011ff" stroke-width="0.6"/><path d="M1303.6 594.2L1285.3 601.9L1298.0 609.5Z" fill="#1015ff" stroke="#1015ff" stroke-width="0.6"/><path d="M1298.0 609.5L1285.3 601.9L1279.7 617.2Z" fill="#0710ff" stroke="#0710ff" stroke-width="0.6"/><path d="M1651.1 449.1L1638.4 441.4L1632.8 456.7Z" fill="#ff1002" stroke="#ff1002" stroke-width="0.6"/><path d="M1638.4 441.4L1620.1 449.1L1632.8 456.7Z" fill="#ff1304" stroke="#ff1304" stroke-width="0.6"/><path d="M1632.8 456.7L1620.1 449.1L1614.5 464.3Z" fill="#ff1109" stroke="#ff1109" stroke-width="0.6"/><path d="M1620.1 449.1L1601.8 456.7L1614.5 464.3Z" fill="#ff140c" stroke="#ff140c" stroke-width="0.6"/><path d="M1614.5 464.3L1601.8 456.7L1596.2 472.0Z" fill="#ff1212" stroke="#ff1212" stroke-width="0.6"/><path d="M1601.8 456.7L1583.5 464.3L1596.2 472.0Z" fill="#ff1615" stroke="#ff1615" stroke-width="0.6"/><path d="M1596.2 472.0L1583.5 464.3L1577.9 479.6Z" fill="#ff131b" stroke="#ff131b" stroke-width="0.6"/><path d="M1583.5 464.3L1565.2 472.0L1577.9 479.6Z" fill="#ff171f" stroke="#ff171f" stroke-width="0.6"/><path d="M1577.9 479.6L1565.2 472.0L1559.6 487.3Z" fill="#ff1526" stroke="#ff1526" stroke-width="0.6"/><path d="M1565.2 472.0L1546.9 479.6L1559.6 487.3Z" fill="#ff192b" stroke="#ff192b" stroke-width="0.6"/><path d="M1559.6 487.3L1546.9 479.6L1541.3 494.9Z" fill="#ff1632" stroke="#ff1632" stroke-width="0.6"/><path d="M1546.9 479.6L1528.7 487.3L1541.3 494.9Z" fill="#ff1a38" stroke="#ff1a38" stroke-width="0.6"/><path d="M1541.3 494.9L1528.7 487.3L1523.1 502.5Z" fill="#ff1840" stroke="#ff1840" stroke-width="0.6"/><path d="M1528.7 487.3L1510.4 494.9L1523.1 502.5Z" fill="#ff1d47" stroke="#ff1d47" stroke-width="0.6"/><path d="M1523.1 502.5L1510.4 494.9L1504.8 510.2Z" fill="#ff1a51" stroke="#ff1a51" stroke-width="0.6"/><path d="M1510.4 494.9L1492.1 502.5L1504.8 510.2Z" fill="#ff1f59" stroke="#ff1f59" stroke-width="0.6"/><path d="M1504.8 510.2L1492.1 502.5L1486.5 517.8Z" fill="#ff1c64" stroke="#ff1c64" stroke-width="0.6"/><path d="M1492.1 502.5L1473.8 510.2L1486.5 517.8Z" fill="#ff226e" stroke="#ff226e" stroke-width="0.6"/><path d="M1486.5 517.8L1473.8 510.2L1468.2 525.5Z" fill="#ff1f7b" stroke="#ff1f7b" stroke-width="0.6"/><path d="M1473.8 510.2L1455.5 517.8L1468.2 525.5Z" fill="#ff2688" stroke="#ff2688" stroke-width="0.6"/><path d="M1468.2 525.5L1455.5 517.8L1449.9 533.1Z" fill="#ff2297" stroke="#ff2297" stroke-width="0.6"/><path d="M1455.5 517.8L1437.2 525.5L1449.9 533.1Z" fill="#ff2aa8" stroke="#ff2aa8" stroke-width="0.6"/><path d="M1449.9 533.1L1437.2 525.5L1431.6 540.8Z" fill="#ff26b9" stroke="#ff26b9" stroke-width="0.6"/><path d="M1437.2 525.5L1418.9 533.1L1431.6 540.8Z" fill="#ff2fcf" stroke="#ff2fcf" stroke-width="0.6"/><path d="M1431.6 540.8L1418.9 533.1L1413.3 548.4Z" fill="#ff2be5" stroke="#ff2be5" stroke-width="0.6"/><path d="M1418.9 533.1L1400.6 540.8L1413.3 548.4Z" fill="#fa36ff" stroke="#fa36ff" stroke-width="0.6"/><path d="M1413.3 548.4L1400.6 540.8L1395.0 556.0Z" fill="#e22dff" stroke="#e22dff" stroke-width="0.6"/><path d="M1400.6 540.8L1382.3 548.4L1395.0 556.0Z" fill="#c532ff" stroke="#c532ff" stroke-width="0.6"/><path d="M1395.0 556.0L1382.3 548.4L1376.7 563.7Z" fill="#b129ff" stroke="#b129ff" stroke-width="0.6"/><path d="M1382.3 548.4L1364.0 556.0L1376.7 563.7Z" fill="#972eff" stroke="#972eff" stroke-width="0.6"/><path d="M1376.7 563.7L1364.0 556.0L1358.4 571.3Z" fill="#8627ff" stroke="#8627ff" stroke-width="0.6"/><path d="M1364.0 556.0L1345.7 563.7L1358.4 571.3Z" fill="#6f2bff" stroke="#6f2bff" stroke-width="0.6"/><path d="M1358.4 571.3L1345.7 563.7L1340.1 579.0Z" fill="#6124ff" stroke="#6124ff" stroke-width="0.6"/><path d="M1345.7 563.7L1327.5 571.3L1340.1 579.0Z" fill="#4c29ff" stroke="#4c29ff" stroke-width="0.6"/><path d="M1340.1 579.0L1327.5 571.3L1321.9 586.6Z" fill="#4022ff" stroke="#4022ff" stroke-width="0.6"/><path d="M1327.5 571.3L1309.2 579.0L1321.9 586.6Z" fill="#2c26ff" stroke="#2c26ff" stroke-width="0.6"/><path d="M1321.9 586.6L1309.2 579.0L1303.6 594.2Z" fill="#2220ff" stroke="#2220ff" stroke-width="0.6"/><path d="M1309.2 579.0L1290.9 586.6L1303.6 594.2Z" fill="#1024ff" stroke="#1024ff" stroke-width="0.6"/><path d="M1303.6 594.2L1290.9 586.6L1285.3 601.9Z" fill="#081fff" stroke="#081fff" stroke-width="0.6"/><path d="M1638.4 441.4L1625.7 433.8L1620.1 449.1Z" fill="#ff1902" stroke="#ff1902" stroke-width="0.6"/><path d="M1625.7 433.8L1607.4 441.4L1620.1 449.1Z" fill="#ff1c05" stroke="#ff1c05" stroke-width="0.6"/><path d="M1620.1 449.1L1607.4 441.4L1601.8 456.7Z" fill="#ff1a0a" stroke="#ff1a0a" stroke-width="0.6"/><path d="M1607.4 441.4L1589.1 449.1L1601.8 456.7Z" fill="#ff1e0d" stroke="#ff1e0d" stroke-width="0.6"/><path d="M1601.8 456.7L1589.1 449.1L1583.5 464.3Z" fill="#ff1c13" stroke="#ff1c13" stroke-width="0.6"/><path d="M1589.1 449.1L1570.8 456.7L1583.5 464.3Z" fill="#ff2017" stroke="#ff2017" stroke-width="0.6"/><path d="M1583.5 464.3L1570.8 456.7L1565.2 472.0Z" fill="#ff1d1d" stroke="#ff1d1d" stroke-width="0.6"/><path d="M1570.8 456.7L1552.5 464.3L1565.2 472.0Z" fill="#ff2222" stroke="#ff2222" stroke-width="0.6"/><path d="M1565.2 472.0L1552.5 464.3L1546.9 479.6Z" fill="#ff2029" stroke="#ff2029" stroke-width="0.6"/><path d="M1552.5 464.3L1534.3 472.0L1546.9 479.6Z" fill="#ff252e" stroke="#ff252e" stroke-width="0.6"/><path d="M1546.9 479.6L1534.3 472.0L1528.7 487.3Z" fill="#ff2236" stroke="#ff2236" stroke-width="0.6"/><path d="M1534.3 472.0L1516.0 479.6L1528.7 487.3Z" fill="#ff273d" stroke="#ff273d" stroke-width="0.6"/><path d="M1528.7 487.3L1516.0 479.6L1510.4 494.9Z" fill="#ff2546" stroke="#ff2546" stroke-width="0.6"/><path d="M1516.0 479.6L1497.7 487.3L1510.4 494.9Z" fill="#ff2b4e" stroke="#ff2b4e" stroke-width="0.6"/><path d="M1510.4 494.9L1497.7 487.3L1492.1 502.5Z" fill="#ff2858" stroke="#ff2858" stroke-width="0.6"/><path d="M1497.7 487.3L1479.4 494.9L1492.1 502.5Z" fill="#ff2f62" stroke="#ff2f62" stroke-width="0.6"/><path d="M1492.1 502.5L1479.4 494.9L1473.8 510.2Z" fill="#ff2c6e" stroke="#ff2c6e" stroke-width="0.6"/><path d="M1479.4 494.9L1461.1 502.5L1473.8 510.2Z" fill="#ff347a" stroke="#ff347a" stroke-width="0.6"/><path d="M1473.8 510.2L1461.1 502.5L1455.5 517.8Z" fill="#ff3188" stroke="#ff3188" stroke-width="0.6"/><path d="M1461.1 502.5L1442.8 510.2L1455.5 517.8Z" fill="#ff3a98" stroke="#ff3a98" stroke-width="0.6"/><path d="M1455.5 517.8L1442.8 510.2L1437.2 525.5Z" fill="#ff37a9" stroke="#ff37a9" stroke-width="0.6"/><path d="M1442.8 510.2L1424.5 517.8L1437.2 525.5Z" fill="#ff41be" stroke="#ff41be" stroke-width="0.6"/><path d="M1437.2 525.5L1424.5 517.8L1418.9 533.1Z" fill="#ff3ed3" stroke="#ff3ed3" stroke-width="0.6"/><path d="M1424.5 517.8L1406.2 525.5L1418.9 533.1Z" fill="#ff4bef" stroke="#ff4bef" stroke-width="0.6"/><path d="M1418.9 533.1L1406.2 525.5L1400.6 540.8Z" fill="#f445ff" stroke="#f445ff" stroke-width="0.6"/><path d="M1406.2 525.5L1387.9 533.1L1400.6 540.8Z" fill="#d44aff" stroke="#d44aff" stroke-width="0.6"/><path d="M1400.6 540.8L1387.9 533.1L1382.3 548.4Z" fill="#be40ff" stroke="#be40ff" stroke-width="0.6"/><path d="M1387.9 533.1L1369.6 540.8L1382.3 548.4Z" fill="#a245ff" stroke="#a245ff" stroke-width="0.6"/><path d="M1382.3 548.4L1369.6 540.8L1364.0 556.0Z" fill="#8f3bff" stroke="#8f3bff" stroke-width="0.6"/><path d="M1369.6 540.8L1351.3 548.4L1364.0 556.0Z" fill="#7740ff" stroke="#7740ff" stroke-width="0.6"/><path d="M1364.0 556.0L1351.3 548.4L1345.7 563.7Z" fill="#6737ff" stroke="#6737ff" stroke-width="0.6"/><path d="M1351.3 548.4L1333.1 556.0L1345.7 563.7Z" fill="#513cff" stroke="#513cff" stroke-width="0.6"/><path d="M1345.7 563.7L1333.1 556.0L1327.5 571.3Z" fill="#4434ff" stroke="#4434ff" stroke-width="0.6"/><path d="M1333.1 556.0L1314.8 563.7L1327.5 571.3Z" fill="#2f38ff" stroke="#2f38ff" stroke-width="0.6"/><path d="M1327.5 571.3L1314.8 563.7L1309.2 579.0Z" fill="#2431ff" stroke="#2431ff" stroke-width="0.6"/><path d="M1314.8 563.7L1296.5 571.3L1309.2 579.0Z" fill="#1135ff" stroke="#1135ff" stroke-width="0.6"/><path d="M1309.2 579.0L1296.5 571.3L1290.9 586.6Z" fill="#082eff" stroke="#082eff" stroke-width="0.6"/><path d="M1625.7 433.8L1613.0 426.1L1607.4 441.4Z" fill="#ff2202" stroke="#ff2202" stroke-width="0.6"/><path d="M1613.0 426.1L1594.7 433.8L1607.4 441.4Z" fill="#ff2605" stroke="#ff2605" stroke-width="0.6"/><path d="M1607.4 441.4L1594.7 433.8L1589.1 449.1Z" fill="#ff240b" stroke="#ff240b" stroke-width="0.6"/><path d="M1594.7 433.8L1576.4 441.4L1589.1 449.1Z" fill="#ff290e" stroke="#ff290e" stroke-width="0.6"/><path d="M1589.1 449.1L1576.4 441.4L1570.8 456.7Z" fill="#ff2614" stroke="#ff2614" stroke-width="0.6"/><path d="M1576.4 441.4L1558.1 449.1L1570.8 456.7Z" fill="#ff2b18" stroke="#ff2b18" stroke-width="0.6"/><path d="M1570.8 456.7L1558.1 449.1L1552.5 464.3Z" fill="#ff291f" stroke="#ff291f" stroke-width="0.6"/><path d="M1558.1 449.1L1539.9 456.7L1552.5 464.3Z" fill="#ff2f24" stroke="#ff2f24" stroke-width="0.6"/><path d="M1552.5 464.3L1539.9 456.7L1534.3 472.0Z" fill="#ff2c2c" stroke="#ff2c2c" stroke-width="0.6"/><path d="M1539.9 456.7L1521.6 464.3L1534.3 472.0Z" fill="#ff3232" stroke="#ff3232" stroke-width="0.6"/><path d="M1534.3 472.0L1521.6 464.3L1516.0 479.6Z" fill="#ff303b" stroke="#ff303b" stroke-width="0.6"/><path d="M1521.6 464.3L1503.3 472.0L1516.0 479.6Z" fill="#ff3742" stroke="#ff3742" stroke-width="0.6"/><path d="M1516.0 479.6L1503.3 472.0L1497.7 487.3Z" fill="#ff344c" stroke="#ff344c" stroke-width="0.6"/><path d="M1503.3 472.0L1485.0 479.6L1497.7 487.3Z" fill="#ff3c55" stroke="#ff3c55" stroke-width="0.6"/><path d="M1497.7 487.3L1485.0 479.6L1479.4 494.9Z" fill="#ff3960" stroke="#ff3960" stroke-width="0.6"/><path d="M1485.0 479.6L1466.7 487.3L1479.4 494.9Z" fill="#ff426c" stroke="#ff426c" stroke-width="0.6"/><path d="M1479.4 494.9L1466.7 487.3L1461.1 502.5Z" fill="#ff4079" stroke="#ff4079" stroke-width="0.6"/><path d="M1466.7 487.3L1448.4 494.9L1461.1 502.5Z" fill="#ff4a88" stroke="#ff4a88" stroke-width="0.6"/><path d="M1461.1 502.5L1448.4 494.9L1442.8 510.2Z" fill="#ff4798" stroke="#ff4798" stroke-width="0.6"/><path d="M1448.4 494.9L1430.1 502.5L1442.8 510.2Z" fill="#ff53ac" stroke="#ff53ac" stroke-width="0.6"/><path d="M1442.8 510.2L1430.1 502.5L1424.5 517.8Z" fill="#ff51c0" stroke="#ff51c0" stroke-width="0.6"/><path d="M1430.1 502.5L1411.8 510.2L1424.5 517.8Z" fill="#ff60da" stroke="#ff60da" stroke-width="0.6"/><path d="M1424.5 517.8L1411.8 510.2L1406.2 525.5Z" fill="#ff5ef4" stroke="#ff5ef4" stroke-width="0.6"/><path d="M1411.8 510.2L1393.5 517.8L1406.2 525.5Z" fill="#e766ff" stroke="#e766ff" stroke-width="0.6"/><path d="M1406.2 525.5L1393.5 517.8L1387.9 533.1Z" fill="#cd5aff" stroke="#cd5aff" stroke-width="0.6"/><path d="M1393.5 517.8L1375.2 525.5L1387.9 533.1Z" fill="#af5eff" stroke="#af5eff" stroke-width="0.6"/><path d="M1387.9 533.1L1375.2 525.5L1369.6 540.8Z" fill="#9a53ff" stroke="#9a53ff" stroke-width="0.6"/><path d="M1375.2 525.5L1356.9 533.1L1369.6 540.8Z" fill="#7f57ff" stroke="#7f57ff" stroke-width="0.6"/><path d="M1369.6 540.8L1356.9 533.1L1351.3 548.4Z" fill="#6e4dff" stroke="#6e4dff" stroke-width="0.6"/><path d="M1356.9 533.1L1338.7 540.8L1351.3 548.4Z" fill="#5651ff" stroke="#5651ff" stroke-width="0.6"/><path d="M1351.3 548.4L1338.7 540.8L1333.1 556.0Z" fill="#4848ff" stroke="#4848ff" stroke-width="0.6"/><path d="M1338.7 540.8L1320.4 548.4L1333.1 556.0Z" fill="#324cff" stroke="#324cff" stroke-width="0.6"/><path d="M1333.1 556.0L1320.4 548.4L1314.8 563.7Z" fill="#2644ff" stroke="#2644ff" stroke-width="0.6"/><path d="M1320.4 548.4L1302.1 556.0L1314.8 563.7Z" fill="#1348ff" stroke="#1348ff" stroke-width="0.6"/><path d="M1314.8 563.7L1302.1 556.0L1296.5 571.3Z" fill="#0940ff" stroke="#0940ff" stroke-width="0.6"/><path d="M1613.0 426.1L1600.3 418.5L1594.7 433.8Z" fill="#ff2d02" stroke="#ff2d02" stroke-width="0.6"/><path d="M1600.3 418.5L1582.0 426.1L1594.7 433.8Z" fill="#ff3105" stroke="#ff3105" stroke-width="0.6"/><path d="M1594.7 433.8L1582.0 426.1L1576.4 441.4Z" fill="#ff2f0b" stroke="#ff2f0b" stroke-width="0.6"/><path d="M1582.0 426.1L1563.7 433.8L1576.4 441.4Z" fill="#ff350f" stroke="#ff350f" stroke-width="0.6"/><path d="M1576.4 441.4L1563.7 433.8L1558.1 449.1Z" fill="#ff3316" stroke="#ff3316" stroke-width="0.6"/><path d="M1563.7 433.8L1545.4 441.4L1558.1 449.1Z" fill="#ff391a" stroke="#ff391a" stroke-width="0.6"/><path d="M1558.1 449.1L1545.4 441.4L1539.9 456.7Z" fill="#ff3722" stroke="#ff3722" stroke-width="0.6"/><path d="M1545.4 441.4L1527.2 449.1L1539.9 456.7Z" fill="#ff3d27" stroke="#ff3d27" stroke-width="0.6"/><path d="M1539.9 456.7L1527.2 449.1L1521.6 464.3Z" fill="#ff3b2f" stroke="#ff3b2f" stroke-width="0.6"/><path d="M1527.2 449.1L1508.9 456.7L1521.6 464.3Z" fill="#ff4236" stroke="#ff4236" stroke-width="0.6"/><path d="M1521.6 464.3L1508.9 456.7L1503.3 472.0Z" fill="#ff4040" stroke="#ff4040" stroke-width="0.6"/><path d="M1508.9 456.7L1490.6 464.3L1503.3 472.0Z" fill="#ff4948" stroke="#ff4948" stroke-width="0.6"/><path d="M1503.3 472.0L1490.6 464.3L1485.0 479.6Z" fill="#ff4753" stroke="#ff4753" stroke-width="0.6"/><path d="M1490.6 464.3L1472.3 472.0L1485.0 479.6Z" fill="#ff505e" stroke="#ff505e" stroke-width="0.6"/><path d="M1485.0 479.6L1472.3 472.0L1466.7 487.3Z" fill="#ff4e6b" stroke="#ff4e6b" stroke-width="0.6"/><path d="M1472.3 472.0L1454.0 479.6L1466.7 487.3Z" fill="#ff5a78" stroke="#ff5a78" stroke-width="0.6"/><path d="M1466.7 487.3L1454.0 479.6L1448.4 494.9Z" fill="#ff5888" stroke="#ff5888" stroke-width="0.6"/><path d="M1454.0 479.6L1435.7 487.3L1448.4 494.9Z" fill="#ff659a" stroke="#ff659a" stroke-width="0.6"/><path d="M1448.4 494.9L1435.7 487.3L1430.1 502.5Z" fill="#ff64ad" stroke="#ff64ad" stroke-width="0.6"/><path d="M1435.7 487.3L1417.4 494.9L1430.1 502.5Z" fill="#ff75c6" stroke="#ff75c6" stroke-width="0.6"/><path d="M1430.1 502.5L1417.4 494.9L1411.8 510.2Z" fill="#ff74de" stroke="#ff74de" stroke-width="0.6"/><path d="M1417.4 494.9L1399.1 502.5L1411.8 510.2Z" fill="#fc88ff" stroke="#fc88ff" stroke-width="0.6"/><path d="M1411.8 510.2L1399.1 502.5L1393.5 517.8Z" fill="#e079ff" stroke="#e079ff" stroke-width="0.6"/><path d="M1399.1 502.5L1380.8 510.2L1393.5 517.8Z" fill="#be7dff" stroke="#be7dff" stroke-width="0.6"/><path d="M1393.5 517.8L1380.8 510.2L1375.2 525.5Z" fill="#a76fff" stroke="#a76fff" stroke-width="0.6"/><path d="M1380.8 510.2L1362.5 517.8L1375.2 525.5Z" fill="#8973ff" stroke="#8973ff" stroke-width="0.6"/><path d="M1375.2 525.5L1362.5 517.8L1356.9 533.1Z" fill="#7766ff" stroke="#7766ff" stroke-width="0.6"/><path d="M1362.5 517.8L1344.3 525.5L1356.9 533.1Z" fill="#5c6aff" stroke="#5c6aff" stroke-width="0.6"/><path d="M1356.9 533.1L1344.3 525.5L1338.7 540.8Z" fill="#4d5fff" stroke="#4d5fff" stroke-width="0.6"/><path d="M1344.3 525.5L1326.0 533.1L1338.7 540.8Z" fill="#3663ff" stroke="#3663ff" stroke-width="0.6"/><path d="M1338.7 540.8L1326.0 533.1L1320.4 548.4Z" fill="#2959ff" stroke="#2959ff" stroke-width="0.6"/><path d="M1326.0 533.1L1307.7 540.8L1320.4 548.4Z" fill="#145dff" stroke="#145dff" stroke-width="0.6"/><path d="M1320.4 548.4L1307.7 540.8L1302.1 556.0Z" fill="#0954ff" stroke="#0954ff" stroke-width="0.6"/><path d="M1600.3 418.5L1587.6 410.9L1582.0 426.1Z" fill="#ff3802" stroke="#ff3802" stroke-width="0.6"/><path d="M1587.6 410.9L1569.3 418.5L1582.0 426.1Z" fill="#ff3e06" stroke="#ff3e06" stroke-width="0.6"/><path d="M1582.0 426.1L1569.3 418.5L1563.7 433.8Z" fill="#ff3c0c" stroke="#ff3c0c" stroke-width="0.6"/><path d="M1569.3 418.5L1551.0 426.1L1563.7 433.8Z" fill="#ff4310" stroke="#ff4310" stroke-width="0.6"/><path d="M1563.7 433.8L1551.0 426.1L1545.4 441.4Z" fill="#ff4117" stroke="#ff4117" stroke-width="0.6"/><path d="M1551.0 426.1L1532.8 433.8L1545.4 441.4Z" fill="#ff481c" stroke="#ff481c" stroke-width="0.6"/><path d="M1545.4 441.4L1532.8 433.8L1527.2 449.1Z" fill="#ff4624" stroke="#ff4624" stroke-width="0.6"/><path d="M1532.8 433.8L1514.5 441.4L1527.2 449.1Z" fill="#ff4e2a" stroke="#ff4e2a" stroke-width="0.6"/><path d="M1527.2 449.1L1514.5 441.4L1508.9 456.7Z" fill="#ff4d34" stroke="#ff4d34" stroke-width="0.6"/><path d="M1514.5 441.4L1496.2 449.1L1508.9 456.7Z" fill="#ff563b" stroke="#ff563b" stroke-width="0.6"/><path d="M1508.9 456.7L1496.2 449.1L1490.6 464.3Z" fill="#ff5446" stroke="#ff5446" stroke-width="0.6"/><path d="M1496.2 449.1L1477.9 456.7L1490.6 464.3Z" fill="#ff5f50" stroke="#ff5f50" stroke-width="0.6"/><path d="M1490.6 464.3L1477.9 456.7L1472.3 472.0Z" fill="#ff5d5c" stroke="#ff5d5c" stroke-width="0.6"/><path d="M1477.9 456.7L1459.6 464.3L1472.3 472.0Z" fill="#ff6a69" stroke="#ff6a69" stroke-width="0.6"/><path d="M1472.3 472.0L1459.6 464.3L1454.0 479.6Z" fill="#ff6878" stroke="#ff6878" stroke-width="0.6"/><path d="M1459.6 464.3L1441.3 472.0L1454.0 479.6Z" fill="#ff7788" stroke="#ff7788" stroke-width="0.6"/><path d="M1454.0 479.6L1441.3 472.0L1435.7 487.3Z" fill="#ff779b" stroke="#ff779b" stroke-width="0.6"/><path d="M1441.3 472.0L1423.0 479.6L1435.7 487.3Z" fill="#ff89b1" stroke="#ff89b1" stroke-width="0.6"/><path d="M1435.7 487.3L1423.0 479.6L1417.4 494.9Z" fill="#ff89c9" stroke="#ff89c9" stroke-width="0.6"/><path d="M1423.0 479.6L1404.7 487.3L1417.4 494.9Z" fill="#ffa2e9" stroke="#ffa2e9" stroke-width="0.6"/><path d="M1417.4 494.9L1404.7 487.3L1399.1 502.5Z" fill="#f59dff" stroke="#f59dff" stroke-width="0.6"/><path d="M1404.7 487.3L1386.4 494.9L1399.1 502.5Z" fill="#d0a0ff" stroke="#d0a0ff" stroke-width="0.6"/><path d="M1399.1 502.5L1386.4 494.9L1380.8 510.2Z" fill="#b68fff" stroke="#b68fff" stroke-width="0.6"/><path d="M1386.4 494.9L1368.1 502.5L1380.8 510.2Z" fill="#9593ff" stroke="#9593ff" stroke-width="0.6"/><path d="M1380.8 510.2L1368.1 502.5L1362.5 517.8Z" fill="#8084ff" stroke="#8084ff" stroke-width="0.6"/><path d="M1368.1 502.5L1349.9 510.2L1362.5 517.8Z" fill="#6487ff" stroke="#6487ff" stroke-width="0.6"/><path d="M1362.5 517.8L1349.9 510.2L1344.3 525.5Z" fill="#537aff" stroke="#537aff" stroke-width="0.6"/><path d="M1349.9 510.2L1331.6 517.8L1344.3 525.5Z" fill="#3a7dff" stroke="#3a7dff" stroke-width="0.6"/><path d="M1344.3 525.5L1331.6 517.8L1326.0 533.1Z" fill="#2c71ff" stroke="#2c71ff" stroke-width="0.6"/><path d="M1331.6 517.8L1313.3 525.5L1326.0 533.1Z" fill="#1574ff" stroke="#1574ff" stroke-width="0.6"/><path d="M1326.0 533.1L1313.3 525.5L1307.7 540.8Z" fill="#0a6aff" stroke="#0a6aff" stroke-width="0.6"/><path d="M1587.6 410.9L1574.9 403.2L1569.3 418.5Z" fill="#ff4603" stroke="#ff4603" stroke-width="0.6"/><path d="M1574.9 403.2L1556.6 410.9L1569.3 418.5Z" fill="#ff4d06" stroke="#ff4d06" stroke-width="0.6"/><path d="M1569.3 418.5L1556.6 410.9L1551.0 426.1Z" fill="#ff4b0d" stroke="#ff4b0d" stroke-width="0.6"/><path d="M1556.6 410.9L1538.4 418.5L1551.0 426.1Z" fill="#ff5311" stroke="#ff5311" stroke-width="0.6"/><path d="M1551.0 426.1L1538.4 418.5L1532.8 433.8Z" fill="#ff5219" stroke="#ff5219" stroke-width="0.6"/><path d="M1538.4 418.5L1520.1 426.1L1532.8 433.8Z" fill="#ff5a1f" stroke="#ff5a1f" stroke-width="0.6"/><path d="M1532.8 433.8L1520.1 426.1L1514.5 441.4Z" fill="#ff5928" stroke="#ff5928" stroke-width="0.6"/><path d="M1520.1 426.1L1501.8 433.8L1514.5 441.4Z" fill="#ff632e" stroke="#ff632e" stroke-width="0.6"/><path d="M1514.5 441.4L1501.8 433.8L1496.2 449.1Z" fill="#ff6139" stroke="#ff6139" stroke-width="0.6"/><path d="M1501.8 433.8L1483.5 441.4L1496.2 449.1Z" fill="#ff6d41" stroke="#ff6d41" stroke-width="0.6"/><path d="M1496.2 449.1L1483.5 441.4L1477.9 456.7Z" fill="#ff6c4e" stroke="#ff6c4e" stroke-width="0.6"/><path d="M1483.5 441.4L1465.2 449.1L1477.9 456.7Z" fill="#ff7959" stroke="#ff7959" stroke-width="0.6"/><path d="M1477.9 456.7L1465.2 449.1L1459.6 464.3Z" fill="#ff7967" stroke="#ff7967" stroke-width="0.6"/><path d="M1465.2 449.1L1446.9 456.7L1459.6 464.3Z" fill="#ff8976" stroke="#ff8976" stroke-width="0.6"/><path d="M1459.6 464.3L1446.9 456.7L1441.3 472.0Z" fill="#ff8988" stroke="#ff8988" stroke-width="0.6"/><path d="M1446.9 456.7L1428.6 464.3L1441.3 472.0Z" fill="#ff9e9d" stroke="#ff9e9d" stroke-width="0.6"/><path d="M1441.3 472.0L1428.6 464.3L1423.0 479.6Z" fill="#ff9fb3" stroke="#ff9fb3" stroke-width="0.6"/><path d="M1428.6 464.3L1410.3 472.0L1423.0 479.6Z" fill="#ffbad0" stroke="#ffbad0" stroke-width="0.6"/><path d="M1423.0 479.6L1410.3 472.0L1404.7 487.3Z" fill="#ffbdef" stroke="#ffbdef" stroke-width="0.6"/><path d="M1410.3 472.0L1392.0 479.6L1404.7 487.3Z" fill="#e5ccff" stroke="#e5ccff" stroke-width="0.6"/><path d="M1404.7 487.3L1392.0 479.6L1386.4 494.9Z" fill="#c7b6ff" stroke="#c7b6ff" stroke-width="0.6"/><path d="M1392.0 479.6L1373.7 487.3L1386.4 494.9Z" fill="#a3b9ff" stroke="#a3b9ff" stroke-width="0.6"/><path d="M1386.4 494.9L1373.7 487.3L1368.1 502.5Z" fill="#8ca6ff" stroke="#8ca6ff" stroke-width="0.6"/><path d="M1373.7 487.3L1355.5 494.9L1368.1 502.5Z" fill="#6ca9ff" stroke="#6ca9ff" stroke-width="0.6"/><path d="M1368.1 502.5L1355.5 494.9L1349.9 510.2Z" fill="#5a99ff" stroke="#5a99ff" stroke-width="0.6"/><path d="M1355.5 494.9L1337.2 502.5L1349.9 510.2Z" fill="#3e9bff" stroke="#3e9bff" stroke-width="0.6"/><path d="M1349.9 510.2L1337.2 502.5L1331.6 517.8Z" fill="#2f8dff" stroke="#2f8dff" stroke-width="0.6"/><path d="M1337.2 502.5L1318.9 510.2L1331.6 517.8Z" fill="#1790ff" stroke="#1790ff" stroke-width="0.6"/><path d="M1331.6 517.8L1318.9 510.2L1313.3 525.5Z" fill="#0b83ff" stroke="#0b83ff" stroke-width="0.6"/><path d="M1574.9 403.2L1562.2 395.6L1556.6 410.9Z" fill="#ff5603" stroke="#ff5603" stroke-width="0.6"/><path d="M1562.2 395.6L1544.0 403.2L1556.6 410.9Z" fill="#ff5e07" stroke="#ff5e07" stroke-width="0.6"/><path d="M1556.6 410.9L1544.0 403.2L1538.4 418.5Z" fill="#ff5d0e" stroke="#ff5d0e" stroke-width="0.6"/><path d="M1544.0 403.2L1525.7 410.9L1538.4 418.5Z" fill="#ff6613" stroke="#ff6613" stroke-width="0.6"/><path d="M1538.4 418.5L1525.7 410.9L1520.1 426.1Z" fill="#ff651c" stroke="#ff651c" stroke-width="0.6"/><path d="M1525.7 410.9L1507.4 418.5L1520.1 426.1Z" fill="#ff7022" stroke="#ff7022" stroke-width="0.6"/><path d="M1520.1 426.1L1507.4 418.5L1501.8 433.8Z" fill="#ff6f2c" stroke="#ff6f2c" stroke-width="0.6"/><path d="M1507.4 418.5L1489.1 426.1L1501.8 433.8Z" fill="#ff7b33" stroke="#ff7b33" stroke-width="0.6"/><path d="M1501.8 433.8L1489.1 426.1L1483.5 441.4Z" fill="#ff7b3f" stroke="#ff7b3f" stroke-width="0.6"/><path d="M1489.1 426.1L1470.8 433.8L1483.5 441.4Z" fill="#ff8949" stroke="#ff8949" stroke-width="0.6"/><path d="M1483.5 441.4L1470.8 433.8L1465.2 449.1Z" fill="#ff8957" stroke="#ff8957" stroke-width="0.6"/><path d="M1470.8 433.8L1452.5 441.4L1465.2 449.1Z" fill="#ff9b64" stroke="#ff9b64" stroke-width="0.6"/><path d="M1465.2 449.1L1452.5 441.4L1446.9 456.7Z" fill="#ff9c75" stroke="#ff9c75" stroke-width="0.6"/><path d="M1452.5 441.4L1434.2 449.1L1446.9 456.7Z" fill="#ffb388" stroke="#ffb388" stroke-width="0.6"/><path d="M1446.9 456.7L1434.2 449.1L1428.6 464.3Z" fill="#ffb59e" stroke="#ffb59e" stroke-width="0.6"/><path d="M1434.2 449.1L1415.9 456.7L1428.6 464.3Z" fill="#ffd2b8" stroke="#ffd2b8" stroke-width="0.6"/><path d="M1428.6 464.3L1415.9 456.7L1410.3 472.0Z" fill="#ffd7d5" stroke="#ffd7d5" stroke-width="0.6"/><path d="M1415.9 456.7L1397.6 464.3L1410.3 472.0Z" fill="#fdfffc" stroke="#fdfffc" stroke-width="0.6"/><path d="M1410.3 472.0L1397.6 464.3L1392.0 479.6Z" fill="#dde5ff" stroke="#dde5ff" stroke-width="0.6"/><path d="M1397.6 464.3L1379.3 472.0L1392.0 479.6Z" fill="#b4e6ff" stroke="#b4e6ff" stroke-width="0.6"/><path d="M1392.0 479.6L1379.3 472.0L1373.7 487.3Z" fill="#99cfff" stroke="#99cfff" stroke-width="0.6"/><path d="M1379.3 472.0L1361.1 479.6L1373.7 487.3Z" fill="#77d1ff" stroke="#77d1ff" stroke-width="0.6"/><path d="M1373.7 487.3L1361.1 479.6L1355.5 494.9Z" fill="#62bdff" stroke="#62bdff" stroke-width="0.6"/><path d="M1361.1 479.6L1342.8 487.3L1355.5 494.9Z" fill="#44bfff" stroke="#44bfff" stroke-width="0.6"/><path d="M1355.5 494.9L1342.8 487.3L1337.2 502.5Z" fill="#33adff" stroke="#33adff" stroke-width="0.6"/><path d="M1342.8 487.3L1324.5 494.9L1337.2 502.5Z" fill="#19b0ff" stroke="#19b0ff" stroke-width="0.6"/><path d="M1337.2 502.5L1324.5 494.9L1318.9 510.2Z" fill="#0ba0ff" stroke="#0ba0ff" stroke-width="0.6"/><path d="M1562.2 395.6L1549.6 387.9L1544.0 403.2Z" fill="#ff6803" stroke="#ff6803" stroke-width="0.6"/><path d="M1549.6 387.9L1531.3 395.6L1544.0 403.2Z" fill="#ff7207" stroke="#ff7207" stroke-width="0.6"/><path d="M1544.0 403.2L1531.3 395.6L1525.7 410.9Z" fill="#ff7110" stroke="#ff7110" stroke-width="0.6"/><path d="M1531.3 395.6L1513.0 403.2L1525.7 410.9Z" fill="#ff7c15" stroke="#ff7c15" stroke-width="0.6"/><path d="M1525.7 410.9L1513.0 403.2L1507.4 418.5Z" fill="#ff7c1e" stroke="#ff7c1e" stroke-width="0.6"/><path d="M1513.0 403.2L1494.7 410.9L1507.4 418.5Z" fill="#ff8925" stroke="#ff8925" stroke-width="0.6"/><path d="M1507.4 418.5L1494.7 410.9L1489.1 426.1Z" fill="#ff8930" stroke="#ff8930" stroke-width="0.6"/><path d="M1494.7 410.9L1476.4 418.5L1489.1 426.1Z" fill="#ff9939" stroke="#ff9939" stroke-width="0.6"/><path d="M1489.1 426.1L1476.4 418.5L1470.8 433.8Z" fill="#ff9a47" stroke="#ff9a47" stroke-width="0.6"/><path d="M1476.4 418.5L1458.1 426.1L1470.8 433.8Z" fill="#ffad53" stroke="#ffad53" stroke-width="0.6"/><path d="M1470.8 433.8L1458.1 426.1L1452.5 441.4Z" fill="#ffaf63" stroke="#ffaf63" stroke-width="0.6"/><path d="M1458.1 426.1L1439.8 433.8L1452.5 441.4Z" fill="#ffc774" stroke="#ffc774" stroke-width="0.6"/><path d="M1452.5 441.4L1439.8 433.8L1434.2 449.1Z" fill="#ffcb88" stroke="#ffcb88" stroke-width="0.6"/><path d="M1439.8 433.8L1421.5 441.4L1434.2 449.1Z" fill="#ffeba0" stroke="#ffeba0" stroke-width="0.6"/><path d="M1434.2 449.1L1421.5 441.4L1415.9 456.7Z" fill="#fff1bb" stroke="#fff1bb" stroke-width="0.6"/><path d="M1421.5 441.4L1403.2 449.1L1415.9 456.7Z" fill="#e3ffc8" stroke="#e3ffc8" stroke-width="0.6"/><path d="M1415.9 456.7L1403.2 449.1L1397.6 464.3Z" fill="#daffe1" stroke="#daffe1" stroke-width="0.6"/><path d="M1403.2 449.1L1384.9 456.7L1397.6 464.3Z" fill="#b2ffe2" stroke="#b2ffe2" stroke-width="0.6"/><path d="M1397.6 464.3L1384.9 456.7L1379.3 472.0Z" fill="#a8fffc" stroke="#a8fffc" stroke-width="0.6"/><path d="M1384.9 456.7L1366.7 464.3L1379.3 472.0Z" fill="#82fffc" stroke="#82fffc" stroke-width="0.6"/><path d="M1379.3 472.0L1366.7 464.3L1361.1 479.6Z" fill="#6be8ff" stroke="#6be8ff" stroke-width="0.6"/><path d="M1366.7 464.3L1348.4 472.0L1361.1 479.6Z" fill="#4ae9ff" stroke="#4ae9ff" stroke-width="0.6"/><path d="M1361.1 479.6L1348.4 472.0L1342.8 487.3Z" fill="#37d3ff" stroke="#37d3ff" stroke-width="0.6"/><path d="M1348.4 472.0L1330.1 479.6L1342.8 487.3Z" fill="#1bd5ff" stroke="#1bd5ff" stroke-width="0.6"/><path d="M1342.8 487.3L1330.1 479.6L1324.5 494.9Z" fill="#0cc2ff" stroke="#0cc2ff" stroke-width="0.6"/><path d="M1549.6 387.9L1536.9 380.3L1531.3 395.6Z" fill="#ff7d04" stroke="#ff7d04" stroke-width="0.6"/><path d="M1536.9 380.3L1518.6 387.9L1531.3 395.6Z" fill="#ff8908" stroke="#ff8908" stroke-width="0.6"/><path d="M1531.3 395.6L1518.6 387.9L1513.0 403.2Z" fill="#ff8911" stroke="#ff8911" stroke-width="0.6"/><path d="M1518.6 387.9L1500.3 395.6L1513.0 403.2Z" fill="#ff9817" stroke="#ff9817" stroke-width="0.6"/><path d="M1513.0 403.2L1500.3 395.6L1494.7 410.9Z" fill="#ff9822" stroke="#ff9822" stroke-width="0.6"/><path d="M1500.3 395.6L1482.0 403.2L1494.7 410.9Z" fill="#ffa92a" stroke="#ffa92a" stroke-width="0.6"/><path d="M1494.7 410.9L1482.0 403.2L1476.4 418.5Z" fill="#ffaa36" stroke="#ffaa36" stroke-width="0.6"/><path d="M1482.0 403.2L1463.7 410.9L1476.4 418.5Z" fill="#ffbf41" stroke="#ffbf41" stroke-width="0.6"/><path d="M1476.4 418.5L1463.7 410.9L1458.1 426.1Z" fill="#ffc250" stroke="#ffc250" stroke-width="0.6"/><path d="M1463.7 410.9L1445.4 418.5L1458.1 426.1Z" fill="#ffdc5f" stroke="#ffdc5f" stroke-width="0.6"/><path d="M1458.1 426.1L1445.4 418.5L1439.8 433.8Z" fill="#ffe073" stroke="#ffe073" stroke-width="0.6"/><path d="M1445.4 418.5L1427.1 426.1L1439.8 433.8Z" fill="#faff86" stroke="#faff86" stroke-width="0.6"/><path d="M1439.8 433.8L1427.1 426.1L1421.5 441.4Z" fill="#f3ff9a" stroke="#f3ff9a" stroke-width="0.6"/><path d="M1427.1 426.1L1408.8 433.8L1421.5 441.4Z" fill="#ceff9d" stroke="#ceff9d" stroke-width="0.6"/><path d="M1421.5 441.4L1408.8 433.8L1403.2 449.1Z" fill="#c5ffb3" stroke="#c5ffb3" stroke-width="0.6"/><path d="M1408.8 433.8L1390.5 441.4L1403.2 449.1Z" fill="#a2ffb5" stroke="#a2ffb5" stroke-width="0.6"/><path d="M1403.2 449.1L1390.5 441.4L1384.9 456.7Z" fill="#98ffcb" stroke="#98ffcb" stroke-width="0.6"/><path d="M1390.5 441.4L1372.3 449.1L1384.9 456.7Z" fill="#75ffcd" stroke="#75ffcd" stroke-width="0.6"/><path d="M1384.9 456.7L1372.3 449.1L1366.7 464.3Z" fill="#6affe4" stroke="#6affe4" stroke-width="0.6"/><path d="M1372.3 449.1L1354.0 456.7L1366.7 464.3Z" fill="#49ffe4" stroke="#49ffe4" stroke-width="0.6"/><path d="M1366.7 464.3L1354.0 456.7L1348.4 472.0Z" fill="#3cfffc" stroke="#3cfffc" stroke-width="0.6"/><path d="M1354.0 456.7L1335.7 464.3L1348.4 472.0Z" fill="#1dfffc" stroke="#1dfffc" stroke-width="0.6"/><path d="M1348.4 472.0L1335.7 464.3L1330.1 479.6Z" fill="#0deaff" stroke="#0deaff" stroke-width="0.6"/><path d="M1536.9 380.3L1524.2 372.6L1518.6 387.9Z" fill="#ff9704" stroke="#ff9704" stroke-width="0.6"/><path d="M1524.2 372.6L1505.9 380.3L1518.6 387.9Z" fill="#ffa609" stroke="#ffa609" stroke-width="0.6"/><path d="M1518.6 387.9L1505.9 380.3L1500.3 395.6Z" fill="#ffa713" stroke="#ffa713" stroke-width="0.6"/><path d="M1505.9 380.3L1487.6 387.9L1500.3 395.6Z" fill="#ffb91a" stroke="#ffb91a" stroke-width="0.6"/><path d="M1500.3 395.6L1487.6 387.9L1482.0 403.2Z" fill="#ffbb26" stroke="#ffbb26" stroke-width="0.6"/><path d="M1487.6 387.9L1469.3 395.6L1482.0 403.2Z" fill="#ffd12f" stroke="#ffd12f" stroke-width="0.6"/><path d="M1482.0 403.2L1469.3 395.6L1463.7 410.9Z" fill="#ffd53e" stroke="#ffd53e" stroke-width="0.6"/><path d="M1469.3 395.6L1451.0 403.2L1463.7 410.9Z" fill="#fff14b" stroke="#fff14b" stroke-width="0.6"/><path d="M1463.7 410.9L1451.0 403.2L1445.4 418.5Z" fill="#fff65d" stroke="#fff65d" stroke-width="0.6"/><path d="M1451.0 403.2L1432.7 410.9L1445.4 418.5Z" fill="#e5ff65" stroke="#e5ff65" stroke-width="0.6"/><path d="M1445.4 418.5L1432.7 410.9L1427.1 426.1Z" fill="#ddff76" stroke="#ddff76" stroke-width="0.6"/><path d="M1432.7 410.9L1414.4 418.5L1427.1 426.1Z" fill="#bcff7a" stroke="#bcff7a" stroke-width="0.6"/><path d="M1427.1 426.1L1414.4 418.5L1408.8 433.8Z" fill="#b4ff8d" stroke="#b4ff8d" stroke-width="0.6"/><path d="M1414.4 418.5L1396.1 426.1L1408.8 433.8Z" fill="#94ff90" stroke="#94ff90" stroke-width="0.6"/><path d="M1408.8 433.8L1396.1 426.1L1390.5 441.4Z" fill="#8affa3" stroke="#8affa3" stroke-width="0.6"/><path d="M1396.1 426.1L1377.8 433.8L1390.5 441.4Z" fill="#6bffa6" stroke="#6bffa6" stroke-width="0.6"/><path d="M1390.5 441.4L1377.8 433.8L1372.3 449.1Z" fill="#61ffb9" stroke="#61ffb9" stroke-width="0.6"/><path d="M1377.8 433.8L1359.6 441.4L1372.3 449.1Z" fill="#43ffbb" stroke="#43ffbb" stroke-width="0.6"/><path d="M1372.3 449.1L1359.6 441.4L1354.0 456.7Z" fill="#37ffd0" stroke="#37ffd0" stroke-width="0.6"/><path d="M1359.6 441.4L1341.3 449.1L1354.0 456.7Z" fill="#1affd1" stroke="#1affd1" stroke-width="0.6"/><path d="M1354.0 456.7L1341.3 449.1L1335.7 464.3Z" fill="#0dffe6" stroke="#0dffe6" stroke-width="0.6"/><path d="M1524.2 372.6L1511.5 365.0L1505.9 380.3Z" fill="#ffb604" stroke="#ffb604" stroke-width="0.6"/><path d="M1511.5 365.0L1493.2 372.6L1505.9 380.3Z" fill="#ffc90a" stroke="#ffc90a" stroke-width="0.6"/><path d="M1505.9 380.3L1493.2 372.6L1487.6 387.9Z" fill="#ffcc15" stroke="#ffcc15" stroke-width="0.6"/><path d="M1493.2 372.6L1474.9 380.3L1487.6 387.9Z" fill="#ffe31d" stroke="#ffe31d" stroke-width="0.6"/><path d="M1487.6 387.9L1474.9 380.3L1469.3 395.6Z" fill="#ffe72b" stroke="#ffe72b" stroke-width="0.6"/><path d="M1474.9 380.3L1456.6 387.9L1469.3 395.6Z" fill="#f8ff35" stroke="#f8ff35" stroke-width="0.6"/><path d="M1469.3 395.6L1456.6 387.9L1451.0 403.2Z" fill="#f2ff44" stroke="#f2ff44" stroke-width="0.6"/><path d="M1456.6 387.9L1438.3 395.6L1451.0 403.2Z" fill="#d2ff49" stroke="#d2ff49" stroke-width="0.6"/><path d="M1451.0 403.2L1438.3 395.6L1432.7 410.9Z" fill="#cbff58" stroke="#cbff58" stroke-width="0.6"/><path d="M1438.3 395.6L1420.0 403.2L1432.7 410.9Z" fill="#adff5d" stroke="#adff5d" stroke-width="0.6"/><path d="M1432.7 410.9L1420.0 403.2L1414.4 418.5Z" fill="#a5ff6d" stroke="#a5ff6d" stroke-width="0.6"/><path d="M1420.0 403.2L1401.7 410.9L1414.4 418.5Z" fill="#88ff71" stroke="#88ff71" stroke-width="0.6"/><path d="M1414.4 418.5L1401.7 410.9L1396.1 426.1Z" fill="#7fff81" stroke="#7fff81" stroke-width="0.6"/><path d="M1401.7 410.9L1383.4 418.5L1396.1 426.1Z" fill="#63ff84" stroke="#63ff84" stroke-width="0.6"/><path d="M1396.1 426.1L1383.4 418.5L1377.8 433.8Z" fill="#59ff96" stroke="#59ff96" stroke-width="0.6"/><path d="M1383.4 418.5L1365.2 426.1L1377.8 433.8Z" fill="#3eff98" stroke="#3eff98" stroke-width="0.6"/><path d="M1377.8 433.8L1365.2 426.1L1359.6 441.4Z" fill="#32ffaa" stroke="#32ffaa" stroke-width="0.6"/><path d="M1365.2 426.1L1346.9 433.8L1359.6 441.4Z" fill="#18ffac" stroke="#18ffac" stroke-width="0.6"/><path d="M1359.6 441.4L1346.9 433.8L1341.3 449.1Z" fill="#0cffbf" stroke="#0cffbf" stroke-width="0.6"/><path d="M1511.5 365.0L1498.8 357.4L1493.2 372.6Z" fill="#ffdc05" stroke="#ffdc05" stroke-width="0.6"/><path d="M1498.8 357.4L1480.5 365.0L1493.2 372.6Z" fill="#fff50b" stroke="#fff50b" stroke-width="0.6"/><path d="M1493.2 372.6L1480.5 365.0L1474.9 380.3Z" fill="#fffa18" stroke="#fffa18" stroke-width="0.6"/><path d="M1480.5 365.0L1462.2 372.6L1474.9 380.3Z" fill="#e6ff1e" stroke="#e6ff1e" stroke-width="0.6"/><path d="M1474.9 380.3L1462.2 372.6L1456.6 387.9Z" fill="#e0ff2c" stroke="#e0ff2c" stroke-width="0.6"/><path d="M1462.2 372.6L1443.9 380.3L1456.6 387.9Z" fill="#c3ff31" stroke="#c3ff31" stroke-width="0.6"/><path d="M1456.6 387.9L1443.9 380.3L1438.3 395.6Z" fill="#bcff3f" stroke="#bcff3f" stroke-width="0.6"/><path d="M1443.9 380.3L1425.6 387.9L1438.3 395.6Z" fill="#a1ff43" stroke="#a1ff43" stroke-width="0.6"/><path d="M1438.3 395.6L1425.6 387.9L1420.0 403.2Z" fill="#99ff52" stroke="#99ff52" stroke-width="0.6"/><path d="M1425.6 387.9L1407.3 395.6L1420.0 403.2Z" fill="#7eff56" stroke="#7eff56" stroke-width="0.6"/><path d="M1420.0 403.2L1407.3 395.6L1401.7 410.9Z" fill="#75ff65" stroke="#75ff65" stroke-width="0.6"/><path d="M1407.3 395.6L1389.0 403.2L1401.7 410.9Z" fill="#5cff68" stroke="#5cff68" stroke-width="0.6"/><path d="M1401.7 410.9L1389.0 403.2L1383.4 418.5Z" fill="#52ff77" stroke="#52ff77" stroke-width="0.6"/><path d="M1389.0 403.2L1370.8 410.9L1383.4 418.5Z" fill="#39ff7b" stroke="#39ff7b" stroke-width="0.6"/><path d="M1383.4 418.5L1370.8 410.9L1365.2 426.1Z" fill="#2fff8a" stroke="#2fff8a" stroke-width="0.6"/><path d="M1370.8 410.9L1352.5 418.5L1365.2 426.1Z" fill="#17ff8d" stroke="#17ff8d" stroke-width="0.6"/><path d="M1365.2 426.1L1352.5 418.5L1346.9 433.8Z" fill="#0bff9d" stroke="#0bff9d" stroke-width="0.6"/><path d="M1498.8 357.4L1486.1 349.7L1480.5 365.0Z" fill="#f1ff05" stroke="#f1ff05" stroke-width="0.6"/><path d="M1486.1 349.7L1467.8 357.4L1480.5 365.0Z" fill="#d6ff0b" stroke="#d6ff0b" stroke-width="0.6"/><path d="M1480.5 365.0L1467.8 357.4L1462.2 372.6Z" fill="#d0ff17" stroke="#d0ff17" stroke-width="0.6"/><path d="M1467.8 357.4L1449.5 365.0L1462.2 372.6Z" fill="#b6ff1c" stroke="#b6ff1c" stroke-width="0.6"/><path d="M1462.2 372.6L1449.5 365.0L1443.9 380.3Z" fill="#afff29" stroke="#afff29" stroke-width="0.6"/><path d="M1449.5 365.0L1431.2 372.6L1443.9 380.3Z" fill="#96ff2d" stroke="#96ff2d" stroke-width="0.6"/><path d="M1443.9 380.3L1431.2 372.6L1425.6 387.9Z" fill="#8eff3a" stroke="#8eff3a" stroke-width="0.6"/><path d="M1431.2 372.6L1412.9 380.3L1425.6 387.9Z" fill="#75ff3f" stroke="#75ff3f" stroke-width="0.6"/><path d="M1425.6 387.9L1412.9 380.3L1407.3 395.6Z" fill="#6dff4c" stroke="#6dff4c" stroke-width="0.6"/><path d="M1412.9 380.3L1394.6 387.9L1407.3 395.6Z" fill="#55ff50" stroke="#55ff50" stroke-width="0.6"/><path d="M1407.3 395.6L1394.6 387.9L1389.0 403.2Z" fill="#4cff5e" stroke="#4cff5e" stroke-width="0.6"/><path d="M1394.6 387.9L1376.4 395.6L1389.0 403.2Z" fill="#35ff61" stroke="#35ff61" stroke-width="0.6"/><path d="M1389.0 403.2L1376.4 395.6L1370.8 410.9Z" fill="#2bff6f" stroke="#2bff6f" stroke-width="0.6"/><path d="M1376.4 395.6L1358.1 403.2L1370.8 410.9Z" fill="#15ff72" stroke="#15ff72" stroke-width="0.6"/><path d="M1370.8 410.9L1358.1 403.2L1352.5 418.5Z" fill="#0aff81" stroke="#0aff81" stroke-width="0.6"/><path d="M1486.1 349.7L1473.4 342.1L1467.8 357.4Z" fill="#c2ff05" stroke="#c2ff05" stroke-width="0.6"/><path d="M1473.4 342.1L1455.1 349.7L1467.8 357.4Z" fill="#aaff0a" stroke="#aaff0a" stroke-width="0.6"/><path d="M1467.8 357.4L1455.1 349.7L1449.5 365.0Z" fill="#a4ff15" stroke="#a4ff15" stroke-width="0.6"/><path d="M1455.1 349.7L1436.8 357.4L1449.5 365.0Z" fill="#8cff1a" stroke="#8cff1a" stroke-width="0.6"/><path d="M1449.5 365.0L1436.8 357.4L1431.2 372.6Z" fill="#85ff26" stroke="#85ff26" stroke-width="0.6"/><path d="M1436.8 357.4L1418.5 365.0L1431.2 372.6Z" fill="#6eff2b" stroke="#6eff2b" stroke-width="0.6"/><path d="M1431.2 372.6L1418.5 365.0L1412.9 380.3Z" fill="#66ff36" stroke="#66ff36" stroke-width="0.6"/><path d="M1418.5 365.0L1400.2 372.6L1412.9 380.3Z" fill="#50ff3b" stroke="#50ff3b" stroke-width="0.6"/><path d="M1412.9 380.3L1400.2 372.6L1394.6 387.9Z" fill="#47ff47" stroke="#47ff47" stroke-width="0.6"/><path d="M1400.2 372.6L1382.0 380.3L1394.6 387.9Z" fill="#32ff4b" stroke="#32ff4b" stroke-width="0.6"/><path d="M1394.6 387.9L1382.0 380.3L1376.4 395.6Z" fill="#29ff57" stroke="#29ff57" stroke-width="0.6"/><path d="M1382.0 380.3L1363.7 387.9L1376.4 395.6Z" fill="#14ff5b" stroke="#14ff5b" stroke-width="0.6"/><path d="M1376.4 395.6L1363.7 387.9L1358.1 403.2Z" fill="#0aff68" stroke="#0aff68" stroke-width="0.6"/><path d="M1473.4 342.1L1460.7 334.4L1455.1 349.7Z" fill="#99ff05" stroke="#99ff05" stroke-width="0.6"/><path d="M1460.7 334.4L1442.4 342.1L1455.1 349.7Z" fill="#84ff0a" stroke="#84ff0a" stroke-width="0.6"/><path d="M1455.1 349.7L1442.4 342.1L1436.8 357.4Z" fill="#7dff14" stroke="#7dff14" stroke-width="0.6"/><path d="M1442.4 342.1L1424.1 349.7L1436.8 357.4Z" fill="#67ff19" stroke="#67ff19" stroke-width="0.6"/><path d="M1436.8 357.4L1424.1 349.7L1418.5 365.0Z" fill="#60ff24" stroke="#60ff24" stroke-width="0.6"/><path d="M1424.1 349.7L1405.8 357.4L1418.5 365.0Z" fill="#4bff28" stroke="#4bff28" stroke-width="0.6"/><path d="M1418.5 365.0L1405.8 357.4L1400.2 372.6Z" fill="#43ff33" stroke="#43ff33" stroke-width="0.6"/><path d="M1405.8 357.4L1387.6 365.0L1400.2 372.6Z" fill="#2fff37" stroke="#2fff37" stroke-width="0.6"/><path d="M1400.2 372.6L1387.6 365.0L1382.0 380.3Z" fill="#26ff43" stroke="#26ff43" stroke-width="0.6"/><path d="M1387.6 365.0L1369.3 372.6L1382.0 380.3Z" fill="#12ff46" stroke="#12ff46" stroke-width="0.6"/><path d="M1382.0 380.3L1369.3 372.6L1363.7 387.9Z" fill="#09ff52" stroke="#09ff52" stroke-width="0.6"/><path d="M1460.7 334.4L1448.0 326.8L1442.4 342.1Z" fill="#75ff04" stroke="#75ff04" stroke-width="0.6"/><path d="M1448.0 326.8L1429.7 334.4L1442.4 342.1Z" fill="#61ff09" stroke="#61ff09" stroke-width="0.6"/><path d="M1442.4 342.1L1429.7 334.4L1424.1 349.7Z" fill="#5aff13" stroke="#5aff13" stroke-width="0.6"/><path d="M1429.7 334.4L1411.4 342.1L1424.1 349.7Z" fill="#47ff17" stroke="#47ff17" stroke-width="0.6"/><path d="M1424.1 349.7L1411.4 342.1L1405.8 357.4Z" fill="#3fff22" stroke="#3fff22" stroke-width="0.6"/><path d="M1411.4 342.1L1393.2 349.7L1405.8 357.4Z" fill="#2cff26" stroke="#2cff26" stroke-width="0.6"/><path d="M1405.8 357.4L1393.2 349.7L1387.6 365.0Z" fill="#24ff30" stroke="#24ff30" stroke-width="0.6"/><path d="M1393.2 349.7L1374.9 357.4L1387.6 365.0Z" fill="#11ff34" stroke="#11ff34" stroke-width="0.6"/><path d="M1387.6 365.0L1374.9 357.4L1369.3 372.6Z" fill="#09ff3f" stroke="#09ff3f" stroke-width="0.6"/><path d="M1448.0 326.8L1435.3 319.2L1429.7 334.4Z" fill="#55ff04" stroke="#55ff04" stroke-width="0.6"/><path d="M1435.3 319.2L1417.0 326.8L1429.7 334.4Z" fill="#43ff09" stroke="#43ff09" stroke-width="0.6"/><path d="M1429.7 334.4L1417.0 326.8L1411.4 342.1Z" fill="#3cff12" stroke="#3cff12" stroke-width="0.6"/><path d="M1417.0 326.8L1398.8 334.4L1411.4 342.1Z" fill="#2aff16" stroke="#2aff16" stroke-width="0.6"/><path d="M1411.4 342.1L1398.8 334.4L1393.2 349.7Z" fill="#22ff20" stroke="#22ff20" stroke-width="0.6"/><path d="M1398.8 334.4L1380.5 342.1L1393.2 349.7Z" fill="#10ff24" stroke="#10ff24" stroke-width="0.6"/><path d="M1393.2 349.7L1380.5 342.1L1374.9 357.4Z" fill="#08ff2d" stroke="#08ff2d" stroke-width="0.6"/><path d="M1435.3 319.2L1422.6 311.5L1417.0 326.8Z" fill="#38ff04" stroke="#38ff04" stroke-width="0.6"/><path d="M1422.6 311.5L1404.4 319.2L1417.0 326.8Z" fill="#27ff08" stroke="#27ff08" stroke-width="0.6"/><path d="M1417.0 326.8L1404.4 319.2L1398.8 334.4Z" fill="#20ff11" stroke="#20ff11" stroke-width="0.6"/><path d="M1404.4 319.2L1386.1 326.8L1398.8 334.4Z" fill="#0fff15" stroke="#0fff15" stroke-width="0.6"/><path d="M1398.8 334.4L1386.1 326.8L1380.5 342.1Z" fill="#08ff1e" stroke="#08ff1e" stroke-width="0.6"/><path d="M1422.6 311.5L1410.0 303.9L1404.4 319.2Z" fill="#1eff04" stroke="#1eff04" stroke-width="0.6"/><path d="M1410.0 303.9L1391.7 311.5L1404.4 319.2Z" fill="#0fff08" stroke="#0fff08" stroke-width="0.6"/><path d="M1404.4 319.2L1391.7 311.5L1386.1 326.8Z" fill="#07ff10" stroke="#07ff10" stroke-width="0.6"/><path d="M1410.0 303.9L1397.3 296.2L1391.7 311.5Z" fill="#07ff03" stroke="#07ff03" stroke-width="0.6"/><defs><linearGradient id="fbO" x1="0" y1="0" x2="1" y2="1"><stop offset="0" stop-color="#6a9800"/><stop offset="1" stop-color="#9a7000"/></linearGradient><linearGradient id="fbI" x1="0" y1="0" x2="1" y2="1"><stop offset="0" stop-color="#b8ff00"/><stop offset="0.5" stop-color="#ffff00"/><stop offset="1" stop-color="#ffb000"/></linearGradient></defs><rect x="1601" y="154" width="233" height="197" fill="url(#fbO)"/><path d="M1601 175.3 L1834 328.6 V351 H1601 Z" fill="url(#fbI)"/></svg>
<canvas id="cie" width="690" height="523" style="left:1151px;top:147px"></canvas>
<svg width="1920" height="1039" viewBox="0 0 1920 1039" style="pointer-events:none">
<rect x="1600.75" y="153.75" width="233.5" height="197.5" fill="none" stroke="#9a9a9a" stroke-width="1.6"/>
<rect x="1386.3" y="457.8" width="14.4" height="14.4" fill="none" stroke="#ffffff" stroke-width="1.9" stroke-opacity="0.88"/>
<rect x="1371.6" y="457.8" width="14.4" height="14.4" fill="none" stroke="#ffffff" stroke-width="1.9" stroke-opacity="0.88"/>
<rect x="1356.9" y="457.8" width="14.4" height="14.4" fill="none" stroke="#ffffff" stroke-width="1.9" stroke-opacity="0.88"/>
<rect x="1342.2" y="457.8" width="14.4" height="14.4" fill="none" stroke="#ffffff" stroke-width="1.9" stroke-opacity="0.88"/>
<rect x="1327.4" y="457.8" width="14.4" height="14.4" fill="none" stroke="#ffffff" stroke-width="1.9" stroke-opacity="0.88"/>
<rect x="1452.6" y="456.5" width="14.4" height="14.4" fill="none" stroke="#ffffff" stroke-width="1.9" stroke-opacity="0.88"/>
<rect x="1507.7" y="456.5" width="14.4" height="14.4" fill="none" stroke="#ffffff" stroke-width="1.9" stroke-opacity="0.88"/>
<rect x="1556.5" y="456.5" width="14.4" height="14.4" fill="none" stroke="#ffffff" stroke-width="1.9" stroke-opacity="0.88"/>
<rect x="1608.5" y="456.5" width="14.4" height="14.4" fill="none" stroke="#ffffff" stroke-width="1.9" stroke-opacity="0.88"/>
<rect x="1668.3" y="456.5" width="14.4" height="14.4" fill="none" stroke="#ffffff" stroke-width="1.9" stroke-opacity="0.88"/>
<rect x="1397.5" y="422.8" width="14.4" height="14.4" fill="none" stroke="#ffffff" stroke-width="1.9" stroke-opacity="0.88"/>
<rect x="1396.0" y="389.8" width="14.4" height="14.4" fill="none" stroke="#ffffff" stroke-width="1.9" stroke-opacity="0.88"/>
<rect x="1393.5" y="357.8" width="14.4" height="14.4" fill="none" stroke="#ffffff" stroke-width="1.9" stroke-opacity="0.88"/>
<rect x="1391.9" y="324.8" width="14.4" height="14.4" fill="none" stroke="#ffffff" stroke-width="1.9" stroke-opacity="0.88"/>
<rect x="1389.0" y="288.3" width="14.4" height="14.4" fill="none" stroke="#ffffff" stroke-width="1.9" stroke-opacity="0.88"/>
<rect x="1373.3" y="491.6" width="14.4" height="14.4" fill="none" stroke="#ffffff" stroke-width="1.9" stroke-opacity="0.88"/>
<rect x="1347.0" y="524.5" width="14.4" height="14.4" fill="none" stroke="#ffffff" stroke-width="1.9" stroke-opacity="0.88"/>
<rect x="1320.1" y="556.2" width="14.4" height="14.4" fill="none" stroke="#ffffff" stroke-width="1.9" stroke-opacity="0.88"/>
<rect x="1294.2" y="588.1" width="14.4" height="14.4" fill="none" stroke="#ffffff" stroke-width="1.9" stroke-opacity="0.88"/>
<rect x="1264.9" y="624.1" width="14.4" height="14.4" fill="none" stroke="#ffffff" stroke-width="1.9" stroke-opacity="0.88"/>
<rect x="1401.5" y="479.5" width="14.4" height="14.4" fill="none" stroke="#ffffff" stroke-width="1.9" stroke-opacity="0.88"/>
<rect x="1403.2" y="502.8" width="14.4" height="14.4" fill="none" stroke="#ffffff" stroke-width="1.9" stroke-opacity="0.88"/>
<rect x="1404.1" y="521.9" width="14.4" height="14.4" fill="none" stroke="#ffffff" stroke-width="1.9" stroke-opacity="0.88"/>
<rect x="1405.0" y="543.5" width="14.4" height="14.4" fill="none" stroke="#ffffff" stroke-width="1.9" stroke-opacity="0.88"/>
<rect x="1406.2" y="566.9" width="14.4" height="14.4" fill="none" stroke="#ffffff" stroke-width="1.9" stroke-opacity="0.88"/>
<rect x="1417.9" y="434.8" width="14.4" height="14.4" fill="none" stroke="#ffffff" stroke-width="1.9" stroke-opacity="0.88"/>
<rect x="1435.3" y="411.8" width="14.4" height="14.4" fill="none" stroke="#ffffff" stroke-width="1.9" stroke-opacity="0.88"/>
<rect x="1452.8" y="391.4" width="14.4" height="14.4" fill="none" stroke="#ffffff" stroke-width="1.9" stroke-opacity="0.88"/>
<rect x="1468.6" y="370.4" width="14.4" height="14.4" fill="none" stroke="#ffffff" stroke-width="1.9" stroke-opacity="0.88"/>
<rect x="1487.4" y="347.2" width="14.4" height="14.4" fill="none" stroke="#ffffff" stroke-width="1.9" stroke-opacity="0.88"/>
<rect x="1400.1" y="457.7" width="14.4" height="14.4" fill="rgba(255,255,255,0.45)" stroke="#000" stroke-width="2.2" stroke-opacity="1"/>
<circle cx="1381.0" cy="469.4" r="4.5" fill="#a8bcbc" stroke="#002a2a" stroke-width="1.6"/>
<circle cx="1368.5" cy="469.4" r="4.5" fill="#a0bcbc" stroke="#002a2a" stroke-width="1.6"/>
<circle cx="1353.8" cy="469.4" r="4.5" fill="#98bcbc" stroke="#002a2a" stroke-width="1.6"/>
<circle cx="1339.4" cy="469.4" r="4.5" fill="#88bcbc" stroke="#002a2a" stroke-width="1.6"/>
<circle cx="1324.7" cy="469.4" r="4.5" fill="#50b0b0" stroke="#002a2a" stroke-width="1.6"/>
<circle cx="1449.7" cy="468.0" r="4.5" fill="#b09090" stroke="#380008" stroke-width="1.6"/>
<circle cx="1504.5" cy="468.0" r="4.5" fill="#b08080" stroke="#380008" stroke-width="1.6"/>
<circle cx="1556.8" cy="466.3" r="4.5" fill="#b07070" stroke="#380008" stroke-width="1.6"/>
<circle cx="1614.8" cy="466.3" r="4.5" fill="#b06060" stroke="#380008" stroke-width="1.6"/>
<circle cx="1668.2" cy="466.6" r="4.5" fill="#b83a3a" stroke="#380008" stroke-width="1.6"/>
<circle cx="1394.5" cy="434.6" r="4.5" fill="#a8b8a8" stroke="#0c280c" stroke-width="1.6"/>
<circle cx="1392.9" cy="401.4" r="4.5" fill="#9cb89c" stroke="#0c280c" stroke-width="1.6"/>
<circle cx="1390.0" cy="368.0" r="4.5" fill="#8cb88c" stroke="#0c280c" stroke-width="1.6"/>
<circle cx="1388.8" cy="333.2" r="4.5" fill="#80b480" stroke="#0c280c" stroke-width="1.6"/>
<circle cx="1385.9" cy="297.2" r="4.5" fill="#60a050" stroke="#0c280c" stroke-width="1.6"/>
<circle cx="1369.7" cy="501.0" r="4.5" fill="#a8a8b8" stroke="#0c0c38" stroke-width="1.6"/>
<circle cx="1345.2" cy="534.6" r="4.5" fill="#9a9ab8" stroke="#0c0c38" stroke-width="1.6"/>
<circle cx="1319.0" cy="564.6" r="4.5" fill="#8c8cb8" stroke="#0c0c38" stroke-width="1.6"/>
<circle cx="1294.4" cy="597.3" r="4.5" fill="#7878b0" stroke="#0c0c38" stroke-width="1.6"/>
<circle cx="1269.4" cy="628.5" r="4.5" fill="#3838a0" stroke="#0c0c38" stroke-width="1.6"/>
<circle cx="1397.4" cy="489.3" r="4.5" fill="#b8a0b8" stroke="#2c002c" stroke-width="1.6"/>
<circle cx="1399.2" cy="512.6" r="4.5" fill="#b894b8" stroke="#2c002c" stroke-width="1.6"/>
<circle cx="1400.0" cy="531.7" r="4.5" fill="#b884b8" stroke="#2c002c" stroke-width="1.6"/>
<circle cx="1401.4" cy="553.3" r="4.5" fill="#b870b8" stroke="#2c002c" stroke-width="1.6"/>
<circle cx="1403.2" cy="575.0" r="4.5" fill="#b040b0" stroke="#2c002c" stroke-width="1.6"/>
<circle cx="1414.7" cy="445.5" r="4.5" fill="#bcbca0" stroke="#282800" stroke-width="1.6"/>
<circle cx="1432.2" cy="422.6" r="4.5" fill="#bcbc90" stroke="#282800" stroke-width="1.6"/>
<circle cx="1449.3" cy="401.4" r="4.5" fill="#bcbc80" stroke="#282800" stroke-width="1.6"/>
<circle cx="1466.8" cy="379.4" r="4.5" fill="#bcbc70" stroke="#282800" stroke-width="1.6"/>
<circle cx="1485.6" cy="356.0" r="4.5" fill="#b4b450" stroke="#282800" stroke-width="1.6"/>
<circle cx="1395.7" cy="470.7" r="4.5" fill="#ffffff" stroke="#14141c" stroke-width="1.6"/>
<rect x="1708.8" y="243.8" width="14.4" height="14.4" fill="none" stroke="#ffffff" stroke-width="1.9" stroke-opacity="0.88"/>
<circle cx="1668.0" cy="261.3" r="4.5" fill="#b4b450" stroke="#14141c" stroke-width="1.6"/>
</svg>
</div>
<script>
(function(){
var L=[[0.1741,0.0050],[0.1740,0.0050],[0.1738,0.0049],[0.1736,0.0049],[0.1733,0.0048],[0.1730,0.0048],[0.1726,0.0048],[0.1721,0.0048],[0.1714,0.0051],[0.1703,0.0058],[0.1689,0.0069],[0.1669,0.0086],[0.1644,0.0109],[0.1611,0.0138],[0.1566,0.0177],[0.1510,0.0227],[0.1440,0.0297],[0.1355,0.0399],[0.1241,0.0578],[0.1096,0.0868],[0.0913,0.1327],[0.0687,0.2007],[0.0454,0.2950],[0.0235,0.4127],[0.0082,0.5384],[0.0039,0.6548],[0.0139,0.7502],[0.0389,0.8120],[0.0743,0.8338],[0.1142,0.8262],[0.1547,0.8059],[0.1929,0.7816],[0.2296,0.7543],[0.2658,0.7243],[0.3016,0.6923],[0.3373,0.6589],[0.3731,0.6245],[0.4087,0.5896],[0.4441,0.5547],[0.4788,0.5202],[0.5125,0.4866],[0.5448,0.4544],[0.5752,0.4242],[0.6029,0.3965],[0.6270,0.3725],[0.6482,0.3514],[0.6658,0.3340],[0.6801,0.3197],[0.6915,0.3083],[0.7006,0.2993],[0.7079,0.2920],[0.7140,0.2859],[0.7190,0.2809],[0.7230,0.2770],[0.7260,0.2740],[0.7283,0.2717],[0.7300,0.2700],[0.7311,0.2689],[0.7320,0.2680],[0.7334,0.2666],[0.7344,0.2656],[0.7347,0.2653]];
var cv=document.getElementById('cie'); if(!cv||!cv.getContext) return;
var ctx=cv.getContext('2d'); var W=cv.width,H=cv.height;
var OX=1151, OY=147;
function X(x){return 1150.9+x*821.2-OX;} function Y(y){return 669.8-y*622.6-OY;}
function col(x,y,out){
  var Xc=x/y, Zc=(1-x-y)/y;
  var r=3.2406*Xc-1.5372-0.4986*Zc, g=-0.9689*Xc+1.8758+0.0415*Zc, b=0.0557*Xc-0.2040+1.0570*Zc;
  var inside=(r>=0&&g>=0&&b>=0);
  if(r<0)r=0; if(g<0)g=0; if(b<0)b=0;
  var m=Math.max(r,g,b); if(m<=0)m=1;
  r/=m; g/=m; b/=m;
  var f=inside?255:153;
  out[0]=r*f; out[1]=g*f; out[2]=b*f;
}
var img=ctx.createImageData(W,H); var d=img.data; var c=[0,0,0];
// polygon in pixel coords
var L2=L.slice(0,L.length-5); var CX=1380-OX, CY=420-OY, SH=0.995;
var P0=L2.map(function(p){return [CX+(X(p[0])-CX)*SH, CY+(Y(p[1])-CY)*SH];});
var P=[]; var NS=10;
for(var i=0;i<P0.length-1;i++){
  var pa=P0[Math.max(0,i-1)], pb=P0[i], pc=P0[i+1], pd=P0[Math.min(P0.length-1,i+2)];
  for(var t=0;t<NS;t++){
    var u=t/NS, u2=u*u, u3=u2*u;
    var q=[0,0];
    for(var k=0;k<2;k++){
      q[k]=0.5*((2*pb[k])+(-pa[k]+pc[k])*u+(2*pa[k]-5*pb[k]+4*pc[k]-pd[k])*u2+(-pa[k]+3*pb[k]-3*pc[k]+pd[k])*u3);
    }
    P.push(q);
  }
}
P.push(P0[P0.length-1]);
var SS=3;
for(var py=0;py<H;py++){
  // compute intersections for subsample rows
  for(var s=0;s<SS;s++){
    var yy=py+(s+0.5)/SS;
    var xs=[];
    for(var i=0;i<P.length;i++){
      var a=P[i], bq=P[(i+1)%P.length];
      if((a[1]<=yy&&bq[1]>yy)||(bq[1]<=yy&&a[1]>yy)){
        xs.push(a[0]+(yy-a[1])*(bq[0]-a[0])/(bq[1]-a[1]));
      }
    }
    xs.sort(function(u,v){return u-v;});
    for(var k=0;k+1<xs.length;k+=2){
      var x0=xs[k], x1=xs[k+1];
      var ix0=Math.max(0,Math.floor(x0)), ix1=Math.min(W-1,Math.floor(x1));
      for(var px=ix0;px<=ix1;px++){
        var cov=Math.min(px+1,x1)-Math.max(px,x0); if(cov<=0)continue;
        var o=(py*W+px)*4; d[o+3]+=255*cov/SS;
      }
    }
  }
  for(var px=0;px<W;px++){
    var o=(py*W+px)*4; if(d[o+3]===0)continue;
    var cx=(px+0.5+OX-1150.9)/821.2, cy=(669.8-(py+0.5+OY))/622.6;
    if(cy<0.001)cy=0.001;
    col(cx,cy,c); d[o]=c[0]; d[o+1]=c[1]; d[o+2]=c[2];
  }
}
// inset
var IX0=1601-OX, IY0=154-OY, IW=233, IH=197;
for(var py=IY0;py<IY0+IH;py++){
  for(var px=IX0;px<IX0+IW;px++){
    var cx=0.4193+(px+OX+0.5-1716)/4530, cy=0.5053-(py+OY+0.5-251)/3755;
    col(cx,cy,c); var o=(py*W+px)*4; d[o]=c[0];d[o+1]=c[1];d[o+2]=c[2];d[o+3]=255;
  }
}
ctx.putImageData(img,0,0);
})();

</script>
</body></html>
